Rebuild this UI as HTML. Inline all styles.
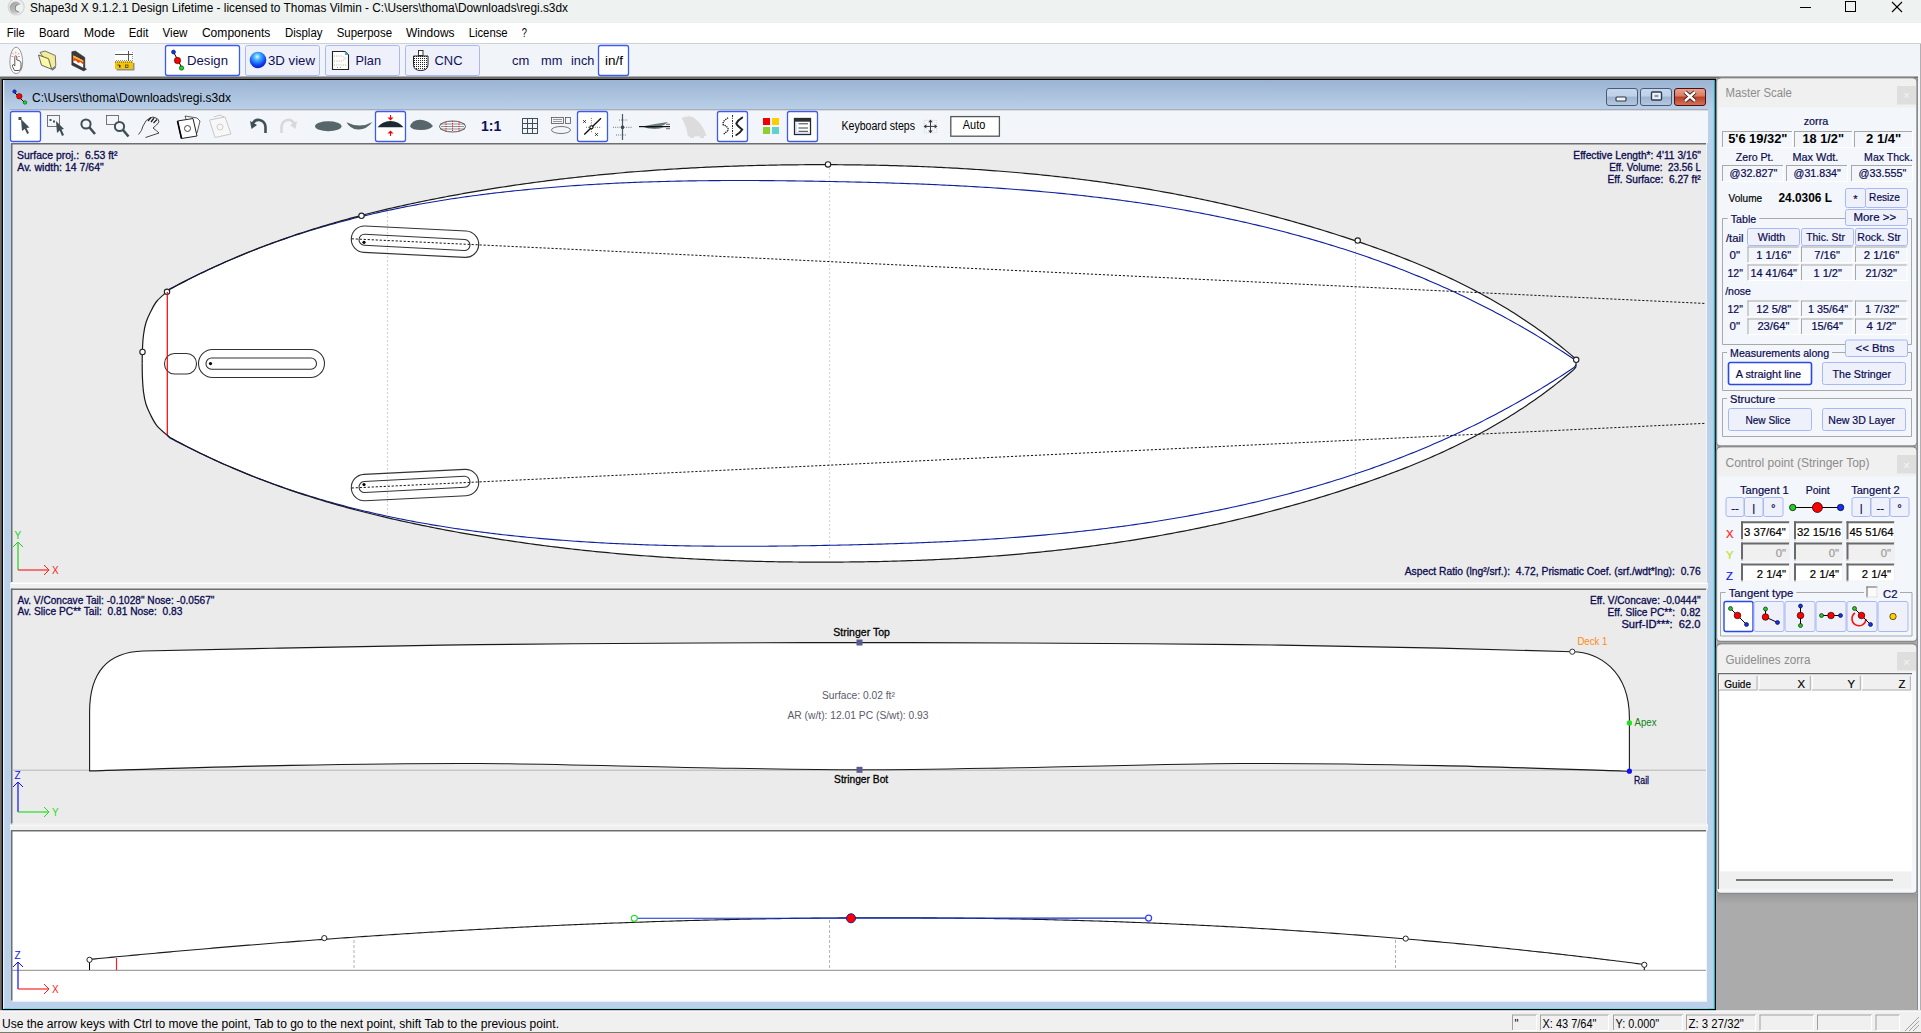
<!DOCTYPE html><html><head><meta charset="utf-8"><style>html,body{margin:0;padding:0;width:1921px;height:1033px;overflow:hidden;background:#f0f0f0;font-family:"Liberation Sans",sans-serif}</style></head><body><svg width="1921" height="1033" viewBox="0 0 1921 1033" style="position:absolute;left:0;top:0">
<defs>
<linearGradient id="ctitle" x1="0" y1="0" x2="0" y2="1"><stop offset="0" stop-color="#9ab3d2"/><stop offset="1" stop-color="#bad0e9"/></linearGradient>
<linearGradient id="btnb" x1="0" y1="0" x2="0" y2="1"><stop offset="0" stop-color="#c6d8ee"/><stop offset="0.45" stop-color="#bdd1ea"/><stop offset="0.5" stop-color="#9fb5cf"/><stop offset="1" stop-color="#b4c9e2"/></linearGradient>
<linearGradient id="btnr" x1="0" y1="0" x2="0" y2="1"><stop offset="0" stop-color="#e8a593"/><stop offset="0.45" stop-color="#d97b62"/><stop offset="0.5" stop-color="#b93f25"/><stop offset="1" stop-color="#d3765c"/></linearGradient>
<linearGradient id="appic" x1="0" y1="0" x2="1" y2="1"><stop offset="0" stop-color="#9a9a9a"/><stop offset="1" stop-color="#e0dcdc"/></linearGradient>
<linearGradient id="shadow" x1="0" y1="0" x2="0" y2="1"><stop offset="0" stop-color="#989898"/><stop offset="1" stop-color="#ababab"/></linearGradient>
<radialGradient id="sphere" cx="0.45" cy="0.3" r="0.7"><stop offset="0" stop-color="#d8f8ff"/><stop offset="0.3" stop-color="#40b0ff"/><stop offset="0.75" stop-color="#1040f0"/><stop offset="1" stop-color="#0020c0"/></radialGradient>
<pattern id="dots" x="0" y="0" width="2" height="2" patternUnits="userSpaceOnUse"><rect width="2" height="2" fill="#fff"/><rect width="1" height="1" fill="#222"/></pattern>
</defs>
<g font-family="Liberation Sans, sans-serif" style="white-space:pre">
<rect x="0" y="0" width="1921" height="23" fill="#eef2f1" />
<circle cx="16.2" cy="7" r="8" fill="none" stroke="#d0d4d4" stroke-width="1.2"/><circle cx="15.8" cy="7.8" r="6.2" fill="url(#appic)"/><circle cx="19.5" cy="8.2" r="3.6" fill="#eef2f1"/><path d="M18.5,4.5 A3.6,3.6 0 0 0 18.8,11.8" fill="none" stroke="#777" stroke-width="0.8"/>
<text x="30" y="11.8" font-size="12.3" fill="#000" text-anchor="start" font-weight="normal"  textLength="538" lengthAdjust="spacingAndGlyphs">Shape3d X 9.1.2.1 Design Lifetime - licensed to Thomas Vilmin - C:\Users\thoma\Downloads\regi.s3dx</text>
<line x1="1800" y1="7.5" x2="1811" y2="7.5" stroke="#000" stroke-width="1" />
<rect x="1845.5" y="1.5" width="10" height="10" fill="none" stroke="#000" stroke-width="1" />
<line x1="1892" y1="2" x2="1902" y2="12" stroke="#000" stroke-width="1.1" />
<line x1="1902" y1="2" x2="1892" y2="12" stroke="#000" stroke-width="1.1" />
<rect x="0" y="23" width="1921" height="20" fill="#ffffff" />
<line x1="0" y1="43.5" x2="1921" y2="43.5" stroke="#d0d0d0" stroke-width="1" />
<text x="6.8" y="36.6" font-size="12.3" fill="#000" text-anchor="start" font-weight="normal"  textLength="18.0" lengthAdjust="spacingAndGlyphs">File</text>
<text x="38.9" y="36.6" font-size="12.3" fill="#000" text-anchor="start" font-weight="normal"  textLength="30.4" lengthAdjust="spacingAndGlyphs">Board</text>
<text x="83.8" y="36.6" font-size="12.3" fill="#000" text-anchor="start" font-weight="normal"  textLength="31.0" lengthAdjust="spacingAndGlyphs">Mode</text>
<text x="128.8" y="36.6" font-size="12.3" fill="#000" text-anchor="start" font-weight="normal"  textLength="19.5" lengthAdjust="spacingAndGlyphs">Edit</text>
<text x="162.5" y="36.6" font-size="12.3" fill="#000" text-anchor="start" font-weight="normal"  textLength="25" lengthAdjust="spacingAndGlyphs">View</text>
<text x="201.9" y="36.6" font-size="12.3" fill="#000" text-anchor="start" font-weight="normal"  textLength="68.5" lengthAdjust="spacingAndGlyphs">Components</text>
<text x="285.0" y="36.6" font-size="12.3" fill="#000" text-anchor="start" font-weight="normal"  textLength="37.5" lengthAdjust="spacingAndGlyphs">Display</text>
<text x="336.7" y="36.6" font-size="12.3" fill="#000" text-anchor="start" font-weight="normal"  textLength="55.3" lengthAdjust="spacingAndGlyphs">Superpose</text>
<text x="406.0" y="36.6" font-size="12.3" fill="#000" text-anchor="start" font-weight="normal"  textLength="48.5" lengthAdjust="spacingAndGlyphs">Windows</text>
<text x="468.7" y="36.6" font-size="12.3" fill="#000" text-anchor="start" font-weight="normal"  textLength="38.9" lengthAdjust="spacingAndGlyphs">License</text>
<text x="521.8" y="36.6" font-size="12.3" fill="#000" text-anchor="start" font-weight="normal"  textLength="5.2" lengthAdjust="spacingAndGlyphs">?</text>
<rect x="0" y="44" width="1921" height="33" fill="#f1f5fa" />
<line x1="0" y1="77.2" x2="1918" y2="77.2" stroke="#6a6a6a" stroke-width="1.6" />
<path d="M16.2,47.3 C20,47.3 22.6,55 22.6,62 C22.6,69 19.8,73.5 16.2,73.5 C12.6,73.5 9.9,69 9.9,62 C9.9,55 12.4,47.3 16.2,47.3 Z" fill="#fbfbfb" stroke="#6a6a6a" stroke-width="0.7"/>
<g stroke="#f08080" stroke-width="0.9"><line x1="15.8" y1="51.5" x2="15.8" y2="53.5"/><line x1="12.5" y1="53" x2="13.8" y2="54.5"/><line x1="19" y1="53" x2="17.8" y2="54.5"/><line x1="11.5" y1="56.5" x2="13.5" y2="56.5"/><line x1="18" y1="56.5" x2="20" y2="56.5"/></g>
<path d="M14.8,66 L14.8,56.5 Q15.8,55 16.8,56.5 L16.8,60 L19,60.5 Q20.5,61 21,63 L21,68 L19.5,70.5 L14.5,70.5 L12.5,66.5 Q12,64.5 13.5,64.5 Z" fill="#fff" stroke="#333" stroke-width="0.8"/>
<path d="M40,52.5 L45,51 L55.3,55.5 L55.8,65.8 L51.5,69.2 Z" fill="#f3ec98" stroke="#555" stroke-width="0.8"/>
<path d="M38.5,55 L48.5,58.7 L51.6,69.2 L41.5,65.2 Z" fill="#fbf8a6" stroke="#555" stroke-width="0.9"/>
<path d="M51.6,69.5 L56,66 L56,67.8 L52.5,70.8 Z" fill="#777"/>
<path d="M71.8,51.7 L75.3,51 L84.8,57.4 L84.8,67.9 L86.5,69.2 L83.7,70.9 L71.8,65.1 Z" fill="#3a3a3a" stroke="#222" stroke-width="0.5"/>
<path d="M73.4,55.5 L83.2,60.6 L83.2,67.8 L73.4,62.6 Z" fill="#ffffff"/><path d="M73.4,55.5 L83.2,60.6 L83.2,64.5 L80.5,62 L78,63 L76,60.5 L73.4,61 Z" fill="#f04010"/><path d="M73.4,55.5 L83.2,60.6 L83.2,62 L73.4,57.5 Z" fill="#ffc020"/>
<rect x="115" y="51" width="18.5" height="10.5" fill="#ffffff"/><line x1="115" y1="54.5" x2="133" y2="54.5" stroke="#444" stroke-width="0.9"/><line x1="128.5" y1="51" x2="128.5" y2="61" stroke="#444" stroke-width="0.9"/><line x1="116" y1="60.5" x2="133" y2="60.5" stroke="#555" stroke-width="0.8" stroke-dasharray="0.8,1.2"/><line x1="132.5" y1="52" x2="132.5" y2="60" stroke="#555" stroke-width="0.8" stroke-dasharray="0.8,1.2"/>
<rect x="116.5" y="63" width="18" height="7.5" fill="#909090"/><rect x="115" y="61.5" width="18" height="7.5" fill="#f6c400"/><g fill="#333"><rect x="119" y="65" width="1.5" height="2.5"/><rect x="117.5" y="64.6" width="2" height="0.8"/><rect x="125.5" y="65" width="2.5" height="2.5" fill="none" stroke="#333" stroke-width="0.7"/></g><line x1="115" y1="62" x2="133" y2="62" stroke="#222" stroke-width="0.9" stroke-dasharray="0.8,1.2"/>
<rect x="165.5" y="45.5" width="74" height="30" fill="#ffffff" stroke="#3c5cf0" stroke-width="1.3" rx="2" />
<rect x="245.5" y="45.5" width="74" height="30" fill="#eef1f9" stroke="#a9b9f5" stroke-width="1" rx="2" />
<rect x="325.5" y="45.5" width="74" height="30" fill="#eef1f9" stroke="#a9b9f5" stroke-width="1" rx="2" />
<rect x="405.5" y="45.5" width="74" height="30" fill="#eef1f9" stroke="#a9b9f5" stroke-width="1" rx="2" />
<line x1="173.5" y1="52" x2="182" y2="68" stroke="#000" stroke-width="1"/><circle cx="173.5" cy="52" r="2" fill="#1030ff" stroke="#000" stroke-width="0.5"/><circle cx="177.5" cy="60.5" r="3.2" fill="#f00" stroke="#000" stroke-width="0.5"/><circle cx="181.5" cy="68" r="2.2" fill="#10e010" stroke="#000" stroke-width="0.5"/>
<text x="187" y="64.8" font-size="13.3" fill="#10105a" text-anchor="start" font-weight="normal"  textLength="41" lengthAdjust="spacingAndGlyphs">Design</text>
<circle cx="258" cy="60" r="8.3" fill="url(#sphere)"/>
<text x="268" y="64.8" font-size="13.3" fill="#10105a" text-anchor="start" font-weight="normal"  textLength="47" lengthAdjust="spacingAndGlyphs">3D view</text>
<path d="M332.5,51.5 L345,51.5 L348.5,55 L348.5,69.5 L332.5,69.5 Z" fill="#fff" stroke="#222" stroke-width="1.1"/><path d="M345,51.5 L348.5,55 L345,55 Z" fill="#3ab0e0"/><g stroke="#a09060" stroke-width="0.7" stroke-dasharray="1,1.2" fill="none"><path d="M334,56 L342,56 L346,58.5 L342,61 L334,61"/><line x1="334" y1="65" x2="346" y2="65"/></g><g stroke="#555" stroke-width="0.6"><line x1="337" y1="67.5" x2="338" y2="67.5"/><line x1="340" y1="67.5" x2="341" y2="67.5"/></g>
<text x="355.5" y="64.8" font-size="13.3" fill="#10105a" text-anchor="start" font-weight="normal"  textLength="25.5" lengthAdjust="spacingAndGlyphs">Plan</text>
<rect x="418.5" y="50.5" width="4.5" height="5" fill="#fff" stroke="#222" stroke-width="0.9"/><path d="M413.5,56 L428,56 L428,64.5 Q428,70.5 420.7,70.5 Q413.5,70.5 413.5,64.5 Z" fill="url(#dots)" stroke="#222" stroke-width="1"/>
<text x="434.5" y="64.8" font-size="13.3" fill="#10105a" text-anchor="start" font-weight="normal"  textLength="28" lengthAdjust="spacingAndGlyphs">CNC</text>
<text x="512" y="64.8" font-size="13.3" fill="#10105a" text-anchor="start" font-weight="normal"  textLength="17.3" lengthAdjust="spacingAndGlyphs">cm</text>
<text x="541" y="64.8" font-size="13.3" fill="#10105a" text-anchor="start" font-weight="normal"  textLength="21.3" lengthAdjust="spacingAndGlyphs">mm</text>
<text x="571" y="64.8" font-size="13.3" fill="#10105a" text-anchor="start" font-weight="normal"  textLength="23.3" lengthAdjust="spacingAndGlyphs">inch</text>
<rect x="598.5" y="45.5" width="30" height="30" fill="#ffffff" stroke="#3c5cf0" stroke-width="1.3" rx="2" />
<text x="605" y="64.8" font-size="13.3" fill="#000" text-anchor="start" font-weight="normal"  textLength="18" lengthAdjust="spacingAndGlyphs">in/f</text>
<rect x="0" y="78" width="1717" height="933" fill="#6f6f6f" />
<rect x="1716" y="78" width="205" height="933" fill="#ababab" />
<rect x="3" y="79" width="1713" height="931" fill="#b9d1ea" />
<rect x="3" y="79" width="1713" height="31" fill="url(#ctitle)" />
<line x1="3" y1="79.5" x2="1716" y2="79.5" stroke="#000" stroke-width="1" />
<line x1="2.5" y1="79" x2="2.5" y2="1010" stroke="#000" stroke-width="1.5" />
<line x1="1715.2" y1="79" x2="1715.2" y2="1010" stroke="#000" stroke-width="1.5" />
<line x1="3" y1="1009.7" x2="1716" y2="1009.7" stroke="#000" stroke-width="1.5" />
<line x1="1714" y1="80" x2="1714" y2="1009" stroke="#3ee0f0" stroke-width="1" />
<line x1="4" y1="1008.5" x2="1714" y2="1008.5" stroke="#3ee0f0" stroke-width="1" />
<line x1="3.7" y1="80" x2="3.7" y2="1009" stroke="#ffffff" stroke-width="1" />
<line x1="15" y1="93" x2="24" y2="102" stroke="#000" stroke-width="1"/><circle cx="14.5" cy="91.5" r="1.8" fill="#1030ff" stroke="#000" stroke-width="0.4"/><circle cx="19.3" cy="96.3" r="2.8" fill="#f00" stroke="#000" stroke-width="0.4"/><circle cx="25" cy="102.5" r="1.8" fill="#10e010" stroke="#000" stroke-width="0.4"/>
<text x="32" y="101.7" font-size="12.3" fill="#000" text-anchor="start" font-weight="normal"  textLength="199" lengthAdjust="spacingAndGlyphs">C:\Users\thoma\Downloads\regi.s3dx</text>
<rect x="1606.5" y="88.5" width="31" height="17" fill="url(#btnb)" stroke="#4a5a72" stroke-width="1" rx="2.5" />
<rect x="1640.5" y="88.5" width="31" height="17" fill="url(#btnb)" stroke="#4a5a72" stroke-width="1" rx="2.5" />
<rect x="1674.5" y="88.5" width="31" height="17" fill="url(#btnr)" stroke="#501010" stroke-width="1" rx="2.5" />
<rect x="1616" y="97" width="10" height="4" fill="#f4f4f4" stroke="#303a50" stroke-width="1.2" rx="1" />
<rect x="1651.5" y="92" width="10" height="8" fill="#f4f4f4" stroke="#303a50" stroke-width="1.4" rx="1" />
<rect x="1654.5" y="94.8" width="4" height="2.4" fill="#7aa0d0" />
<path d="M1685,92 L1695,101 M1695,92 L1685,101" stroke="#2a1010" stroke-width="4.2"/><path d="M1685,92 L1695,101 M1695,92 L1685,101" stroke="#fff" stroke-width="2.4"/>
<rect x="10" y="110" width="1698" height="33" fill="#f2f5fa" />
<line x1="10" y1="109.8" x2="1708" y2="109.8" stroke="#a0a0a0" stroke-width="1" />
<rect x="10.5" y="111.5" width="30" height="30" fill="#ffffff" stroke="#3c5cf0" stroke-width="1.3" rx="2" />
<rect x="375.5" y="111.5" width="30" height="30" fill="#ffffff" stroke="#3c5cf0" stroke-width="1.3" rx="2" />
<rect x="577.5" y="111.5" width="30" height="30" fill="#ffffff" stroke="#3c5cf0" stroke-width="1.3" rx="2" />
<rect x="717.5" y="111.5" width="30" height="30" fill="#ffffff" stroke="#3c5cf0" stroke-width="1.3" rx="2" />
<rect x="787.5" y="111.5" width="30" height="30" fill="#ffffff" stroke="#3c5cf0" stroke-width="1.3" rx="2" />
<rect x="18.5" y="117" width="3" height="3" fill="#3f4f55"/><path d="M21,119 L29.5,127.5 L26.5,128 L29,133 L27.2,134 L24.8,129 L22,131 Z" fill="#3f4f55"/>
<rect x="47.5" y="115.5" width="12" height="11" fill="none" stroke="#555" stroke-width="0.8"/><rect x="49.5" y="119" width="2" height="2" fill="#3f4f55"/><rect x="53" y="120.5" width="2" height="2" fill="#3f4f55"/><path d="M56,121 L64,129 L61.5,129.5 L64,135 L62,136 L59.7,130.5 L57,133 Z" fill="#3f4f55"/>
<circle cx="86" cy="124" r="4.6" fill="none" stroke="#3f4f55" stroke-width="2"/><line x1="89.5" y1="127.5" x2="95" y2="134" stroke="#3f4f55" stroke-width="2.6"/>
<rect x="106.5" y="115.5" width="12" height="9" fill="none" stroke="#555" stroke-width="0.8"/><circle cx="119.5" cy="126.5" r="4.6" fill="#f2f5fa" stroke="#3f4f55" stroke-width="2"/><line x1="123" y1="130" x2="128.5" y2="136.5" stroke="#3f4f55" stroke-width="2.6"/>
<path d="M138.5,134.5 Q142,131 143,126 Q146,119 150,118 Q153,116 156,118 Q159,119 159,122 Q157,125 153,128 Q157,131 159,133 L145.5,137.5" fill="none" stroke="#333" stroke-width="0.9"/><path d="M148,121 L151,117.5 M151,122 L154,118 M153.5,123 L157,119.5" stroke="#222" stroke-width="1.3"/>
<path d="M185,116 L197,118 L200,121 L197,133 L190,131 Z" fill="#fff" stroke="#333" stroke-width="0.8"/><path d="M177.5,121 L193,118.5 L197,136 L181.5,138.5 Z" fill="#fff" stroke="#222" stroke-width="1"/><circle cx="187.5" cy="128.5" r="3" fill="none" stroke="#333" stroke-width="0.9"/><path d="M177.5,121 L181.5,138.5" stroke="#000" stroke-width="1.6"/>
<path d="M209.5,120 L225,117 L231,134 L215,137.5 Z" fill="#f8f8f8" stroke="#c8c8c8" stroke-width="1"/><circle cx="220" cy="127" r="3" fill="none" stroke="#c8c8c8" stroke-width="0.9"/><path d="M214,117 L220,115 L224,117" stroke="#c8c8c8" fill="none"/>
<path d="M252,126 Q254,119 259.5,120 Q265,121 265.5,127 L265.5,133" fill="none" stroke="#3f4f55" stroke-width="2.6"/><path d="M250,121 L251.5,129 L257,125 Z" fill="#3f4f55"/>
<path d="M295,126 Q293,119 287.5,120 Q282,121 281.5,127 L281.5,133" fill="none" stroke="#d8d8d8" stroke-width="2.6"/><path d="M297,121 L295.5,129 L290,125 Z" fill="#d8d8d8"/>
<ellipse cx="328.3" cy="126.2" rx="13.2" ry="5" fill="#566669"/>
<path d="M346.5,122.2 Q360,129 372.5,122 Q366,130 358,129.5 Q350,129 346.5,122.2 Z" fill="#566669"/>
<path d="M377.5,127.3 Q382,121.3 390.5,121 Q399,121.3 403.5,127.3 Z" fill="#1a2a30"/><path d="M390.5,115 L390.5,120" stroke="#f00" stroke-width="1"/><path d="M387.5,117.5 L390.5,120.5 L393.5,117.5 Z" fill="#f00"/><path d="M390.5,131 L390.5,136" stroke="#f00" stroke-width="1"/><path d="M387.5,133.5 L390.5,130.5 L393.5,133.5 Z" fill="#f00"/>
<path d="M410,126.5 Q412,120 420,119.8 Q428,120 433,126 Q430,130 421,130 Q412,130 410,126.5 Z" fill="#566669"/>
<ellipse cx="452.5" cy="126.5" rx="13" ry="5.5" fill="none" stroke="#333" stroke-width="0.8"/><g stroke="#333" stroke-width="0.5"><line x1="440" y1="124" x2="465" y2="124"/><line x1="440" y1="129" x2="465" y2="129"/><line x1="441" y1="126.5" x2="464" y2="126.5"/></g><g stroke="#f00" stroke-width="0.9" stroke-dasharray="1.2,1"><line x1="446" y1="121.5" x2="446" y2="131.5"/><line x1="452.5" y1="121" x2="452.5" y2="132"/><line x1="459" y1="121.5" x2="459" y2="131.5"/></g>
<text x="481" y="131" font-size="14" fill="#10105a" text-anchor="start" font-weight="bold" >1:1</text>
<g fill="none" stroke="#3f4f55" stroke-width="1"><rect x="522.5" y="118.5" width="15" height="15"/><line x1="527.5" y1="118.5" x2="527.5" y2="133.5"/><line x1="532.5" y1="118.5" x2="532.5" y2="133.5"/><line x1="522.5" y1="123.5" x2="537.5" y2="123.5"/><line x1="522.5" y1="128.5" x2="537.5" y2="128.5"/></g>
<g fill="none" stroke="#555" stroke-width="0.8"><rect x="551.5" y="117.5" width="12" height="6"/><rect x="565.5" y="117.5" width="5" height="6"/><ellipse cx="561" cy="130" rx="9.5" ry="3.5"/></g><g stroke="#555" stroke-width="0.6"><line x1="553" y1="119.5" x2="562" y2="119.5"/><line x1="553" y1="121.5" x2="562" y2="121.5"/></g>
<g stroke="#555" stroke-width="0.9" stroke-dasharray="0.9,1.3"><line x1="591.4" y1="118" x2="591.4" y2="133"/><line x1="586" y1="127.3" x2="601.5" y2="127.3"/></g>
<line x1="584.3" y1="134.6" x2="601" y2="118.2" stroke="#111" stroke-width="1.4"/><circle cx="591.4" cy="127.3" r="1.6" fill="#fff" stroke="#111" stroke-width="1.1"/>
<g stroke="#111" stroke-width="0.9"><path d="M583.2,120.2 L585.8,122.8 M585.8,120.2 L583.2,122.8"/><path d="M595.2,133.2 L597.8,135.8 M597.8,133.2 L595.2,135.8"/></g>
<g stroke="#4a5a60" stroke-width="0.9" stroke-dasharray="0.9,1.3"><line x1="613" y1="127.3" x2="632" y2="127.3"/><line x1="619" y1="120" x2="628" y2="120"/><line x1="616" y1="135" x2="627" y2="135"/></g><line x1="622.5" y1="114" x2="622.5" y2="140" stroke="#4a5a60" stroke-width="1.2"/><rect x="621" y="125.8" width="3" height="3" fill="#3a4a50"/>
<path d="M642,126.5 Q655,123.5 668,122 Q665,125 660,126.5 Z" fill="#6a7a80"/><path d="M642,126.5 Q652,130.5 664,127.5 L642,126.5 Z" fill="#4a5a60"/><line x1="639" y1="126.6" x2="670" y2="126.6" stroke="#111" stroke-width="1.2"/><g stroke="#444" stroke-width="0.8"><line x1="666" y1="124.3" x2="670" y2="124.3"/><line x1="666" y1="128.7" x2="670" y2="128.7"/></g>
<path d="M681.5,118 Q687,115.5 692,116.8 Q701,121 706.5,135.5 L704,136 L704,138 L700,138 L700,136.3 L694,136.5 L694,138 L690,138 L690,136.5 L688,136.5 Q686.5,126 681.5,118 Z" fill="#dcdcdc"/>
<path d="M728.1,117.7 L723.2,121.5 L723.2,124.8 L726.4,126.2 L728,128.5 L727.9,130.5 L723.8,134" fill="none" stroke="#111" stroke-width="1.3" stroke-dasharray="1.3,0.9"/>
<line x1="732.5" y1="115" x2="732.5" y2="137.5" stroke="#111" stroke-width="0.9" stroke-dasharray="2.2,1,0.8,1"/>
<path d="M742.2,117.6 Q738,120 736.3,123.5 Q737.5,126 742.2,129.4 Q740,133 736.3,135" fill="none" stroke="#1a2428" stroke-width="1.9" stroke-linecap="round"/>
<rect x="763" y="118" width="7" height="7" fill="#f00000"/><rect x="772" y="118" width="7" height="7" fill="#ffcc00"/><rect x="763" y="127" width="7" height="7" fill="#8cd030"/><rect x="772" y="127" width="7" height="7" fill="#60d0d0"/>
<rect x="794.5" y="118.5" width="16" height="16" fill="#fff" stroke="#222a30" stroke-width="1.3"/><rect x="794.5" y="118.5" width="16" height="3.2" fill="#2a3238"/><path d="M796,122.5 L796,133 L809,133" fill="none" stroke="#a8c0ff" stroke-width="0.8"/><g stroke="#222a30" stroke-width="0.9"><line x1="798.5" y1="123.8" x2="808" y2="123.8"/><line x1="798.5" y1="128" x2="808" y2="128"/><line x1="798.5" y1="131.3" x2="808" y2="131.3"/></g>
<text x="841.5" y="129.5" font-size="12.3" fill="#000" text-anchor="start" font-weight="normal"  textLength="73.5" lengthAdjust="spacingAndGlyphs">Keyboard steps</text>
<rect x="924.3" y="120.3" width="12.3" height="12.4" fill="none" stroke="#c0c0c0" stroke-width="0.6" stroke-dasharray="1,1"/><g stroke="#3a3a3a" stroke-width="1"><line x1="930.5" y1="120.5" x2="930.5" y2="132.5"/><line x1="924.5" y1="126.4" x2="936.5" y2="126.4"/></g><g fill="#3a3a3a"><path d="M930.5,119.5 L928.3,122.3 L932.7,122.3 Z"/><path d="M930.5,133.3 L928.3,130.5 L932.7,130.5 Z"/><path d="M923.6,126.4 L926.4,124.2 L926.4,128.6 Z"/><path d="M937.4,126.4 L934.6,124.2 L934.6,128.6 Z"/></g>
<rect x="950.8" y="116.6" width="48.6" height="19.6" fill="#ffffff" stroke="#555" stroke-width="1.3" />
<text x="962.8" y="128.9" font-size="12.3" fill="#000" text-anchor="start" font-weight="normal"  textLength="22.5" lengthAdjust="spacingAndGlyphs">Auto</text>
<rect x="10" y="583" width="1698" height="6" fill="#f0f0f0" />
<line x1="10" y1="583.5" x2="1708" y2="583.5" stroke="#ffffff" stroke-width="1" />
<rect x="10" y="824.5" width="1698" height="6" fill="#f0f0f0" />
<line x1="10" y1="825" x2="1708" y2="825" stroke="#ffffff" stroke-width="1" />
<rect x="10" y="1001.5" width="1698" height="7" fill="#b9d1ea" />
<rect x="11" y="143" width="1696" height="440" fill="#ebebeb" />
<line x1="11" y1="143.75" x2="1707" y2="143.75" stroke="#6e6e6e" stroke-width="1.5" />
<line x1="11.75" y1="143" x2="11.75" y2="583" stroke="#6e6e6e" stroke-width="1.5" />
<line x1="11" y1="582.5" x2="1707" y2="582.5" stroke="#f4f4f4" stroke-width="1" />
<line x1="1706.5" y1="143" x2="1706.5" y2="583" stroke="#f4f4f4" stroke-width="1" />
<rect x="11" y="588.5" width="1696" height="236" fill="#ebebeb" />
<line x1="11" y1="589.25" x2="1707" y2="589.25" stroke="#6e6e6e" stroke-width="1.5" />
<line x1="11.75" y1="588.5" x2="11.75" y2="824.5" stroke="#6e6e6e" stroke-width="1.5" />
<line x1="11" y1="824.0" x2="1707" y2="824.0" stroke="#f4f4f4" stroke-width="1" />
<line x1="1706.5" y1="588.5" x2="1706.5" y2="824.5" stroke="#f4f4f4" stroke-width="1" />
<rect x="11" y="830" width="1696" height="171.5" fill="#ffffff" />
<line x1="11" y1="830.75" x2="1707" y2="830.75" stroke="#6e6e6e" stroke-width="1.5" />
<line x1="11.75" y1="830" x2="11.75" y2="1001.5" stroke="#6e6e6e" stroke-width="1.5" />
<line x1="11" y1="1001.0" x2="1707" y2="1001.0" stroke="#f4f4f4" stroke-width="1" />
<line x1="1706.5" y1="830" x2="1706.5" y2="1001.5" stroke="#f4f4f4" stroke-width="1" />
<svg x="12" y="144.5" width="1694" height="438" viewBox="12 144.5 1694 438" overflow="hidden">
<path d="M142.2,363.40 L142.4,350.00 L143.5,335.00 L146.0,322.50 L150.5,312.00 L157.0,301.00 L167.0,291.80 L167.0,291.80 L170.0,289.31 L173.0,287.68 L176.0,286.07 L179.0,284.48 L182.0,282.90 L185.0,281.35 L188.0,279.81 L191.0,278.28 L194.0,276.78 L197.0,275.29 L200.0,273.82 L203.0,272.36 L206.0,270.92 L209.0,269.50 L212.0,268.09 L215.0,266.70 L218.0,265.33 L221.0,263.97 L224.0,262.62 L227.0,261.29 L230.0,259.98 L233.0,258.68 L236.0,257.40 L239.0,256.13 L242.0,254.88 L245.0,253.64 L248.0,252.42 L251.0,251.21 L254.0,250.01 L257.0,248.83 L260.0,247.66 L263.0,246.51 L266.0,245.37 L269.0,244.24 L272.0,243.13 L275.0,242.03 L278.0,240.94 L281.0,239.87 L284.0,238.81 L287.0,237.76 L290.0,236.72 L293.0,235.70 L296.0,234.69 L299.0,233.69 L302.0,232.71 L305.0,231.73 L308.0,230.77 L311.0,229.82 L314.0,228.88 L317.0,227.95 L320.0,227.03 L323.0,226.12 L326.0,225.23 L329.0,224.34 L332.0,223.47 L335.0,222.60 L338.0,221.75 L341.0,220.91 L344.0,220.07 L347.0,219.25 L350.0,218.44 L353.0,217.63 L356.0,216.84 L359.0,216.05 L362.0,215.28 L365.0,214.51 L368.0,213.76 L371.0,213.01 L374.0,212.27 L377.0,211.54 L380.0,210.81 L383.0,210.10 L386.0,209.39 L389.0,208.69 L392.0,208.00 L395.0,207.32 L398.0,206.64 L401.0,205.98 L404.0,205.32 L407.0,204.66 L410.0,204.02 L413.0,203.38 L416.0,202.74 L419.0,202.12 L422.0,201.50 L425.0,200.88 L428.0,200.28 L431.0,199.68 L434.0,199.08 L437.0,198.49 L440.0,197.91 L443.0,197.33 L446.0,196.76 L449.0,196.20 L452.0,195.64 L455.0,195.08 L458.0,194.54 L461.0,193.99 L464.0,193.46 L467.0,192.93 L470.0,192.40 L473.0,191.88 L476.0,191.37 L479.0,190.86 L482.0,190.36 L485.0,189.86 L488.0,189.37 L491.0,188.89 L494.0,188.41 L497.0,187.93 L500.0,187.46 L503.0,187.00 L506.0,186.54 L509.0,186.09 L512.0,185.64 L515.0,185.20 L518.0,184.77 L521.0,184.34 L524.0,183.91 L527.0,183.49 L530.0,183.08 L533.0,182.67 L536.0,182.26 L539.0,181.86 L542.0,181.47 L545.0,181.08 L548.0,180.70 L551.0,180.32 L554.0,179.95 L557.0,179.58 L560.0,179.22 L563.0,178.86 L566.0,178.50 L569.0,178.16 L572.0,177.81 L575.0,177.48 L578.0,177.14 L581.0,176.82 L584.0,176.49 L587.0,176.17 L590.0,175.86 L593.0,175.55 L596.0,175.25 L599.0,174.95 L602.0,174.66 L605.0,174.37 L608.0,174.08 L611.0,173.80 L614.0,173.53 L617.0,173.26 L620.0,172.99 L623.0,172.73 L626.0,172.47 L629.0,172.22 L632.0,171.97 L635.0,171.73 L638.0,171.49 L641.0,171.26 L644.0,171.03 L647.0,170.81 L650.0,170.58 L653.0,170.37 L656.0,170.16 L659.0,169.95 L662.0,169.75 L665.0,169.55 L668.0,169.35 L671.0,169.17 L674.0,168.98 L677.0,168.80 L680.0,168.62 L683.0,168.45 L686.0,168.28 L689.0,168.12 L692.0,167.95 L695.0,167.80 L698.0,167.65 L701.0,167.50 L704.0,167.35 L707.0,167.21 L710.0,167.08 L713.0,166.95 L716.0,166.82 L719.0,166.69 L722.0,166.57 L725.0,166.46 L728.0,166.35 L731.0,166.24 L734.0,166.13 L737.0,166.03 L740.0,165.94 L743.0,165.84 L746.0,165.75 L749.0,165.67 L752.0,165.59 L755.0,165.51 L758.0,165.43 L761.0,165.36 L764.0,165.29 L767.0,165.23 L770.0,165.17 L773.0,165.11 L776.0,165.06 L779.0,165.01 L782.0,164.97 L785.0,164.92 L788.0,164.88 L791.0,164.85 L794.0,164.82 L797.0,164.79 L800.0,164.76 L803.0,164.74 L806.0,164.72 L809.0,164.71 L812.0,164.69 L815.0,164.69 L818.0,164.68 L821.0,164.68 L824.0,164.68 L827.0,164.68 L830.0,164.69 L833.0,164.70 L836.0,164.71 L839.0,164.73 L842.0,164.75 L845.0,164.78 L848.0,164.80 L851.0,164.83 L854.0,164.87 L857.0,164.90 L860.0,164.94 L863.0,164.99 L866.0,165.03 L869.0,165.08 L872.0,165.14 L875.0,165.20 L878.0,165.26 L881.0,165.32 L884.0,165.39 L887.0,165.47 L890.0,165.54 L893.0,165.62 L896.0,165.71 L899.0,165.79 L902.0,165.88 L905.0,165.98 L908.0,166.08 L911.0,166.18 L914.0,166.29 L917.0,166.40 L920.0,166.52 L923.0,166.63 L926.0,166.76 L929.0,166.89 L932.0,167.02 L935.0,167.15 L938.0,167.29 L941.0,167.44 L944.0,167.58 L947.0,167.74 L950.0,167.89 L953.0,168.05 L956.0,168.22 L959.0,168.39 L962.0,168.56 L965.0,168.74 L968.0,168.93 L971.0,169.11 L974.0,169.31 L977.0,169.50 L980.0,169.70 L983.0,169.91 L986.0,170.12 L989.0,170.34 L992.0,170.56 L995.0,170.78 L998.0,171.01 L1001.0,171.25 L1004.0,171.49 L1007.0,171.73 L1010.0,171.98 L1013.0,172.23 L1016.0,172.49 L1019.0,172.75 L1022.0,173.02 L1025.0,173.30 L1028.0,173.58 L1031.0,173.86 L1034.0,174.15 L1037.0,174.44 L1040.0,174.74 L1043.0,175.05 L1046.0,175.36 L1049.0,175.67 L1052.0,175.99 L1055.0,176.32 L1058.0,176.65 L1061.0,176.98 L1064.0,177.32 L1067.0,177.67 L1070.0,178.02 L1073.0,178.38 L1076.0,178.75 L1079.0,179.11 L1082.0,179.49 L1085.0,179.87 L1088.0,180.26 L1091.0,180.65 L1094.0,181.04 L1097.0,181.45 L1100.0,181.86 L1103.0,182.27 L1106.0,182.69 L1109.0,183.12 L1112.0,183.55 L1115.0,183.99 L1118.0,184.43 L1121.0,184.88 L1124.0,185.33 L1127.0,185.80 L1130.0,186.26 L1133.0,186.74 L1136.0,187.22 L1139.0,187.70 L1142.0,188.20 L1145.0,188.69 L1148.0,189.20 L1151.0,189.71 L1154.0,190.23 L1157.0,190.75 L1160.0,191.28 L1163.0,191.81 L1166.0,192.36 L1169.0,192.90 L1172.0,193.46 L1175.0,194.02 L1178.0,194.59 L1181.0,195.16 L1184.0,195.74 L1187.0,196.33 L1190.0,196.93 L1193.0,197.53 L1196.0,198.14 L1199.0,198.75 L1202.0,199.37 L1205.0,200.00 L1208.0,200.63 L1211.0,201.27 L1214.0,201.92 L1217.0,202.58 L1220.0,203.24 L1223.0,203.91 L1226.0,204.58 L1229.0,205.27 L1232.0,205.96 L1235.0,206.65 L1238.0,207.36 L1241.0,208.07 L1244.0,208.79 L1247.0,209.51 L1250.0,210.24 L1253.0,210.98 L1256.0,211.73 L1259.0,212.48 L1262.0,213.25 L1265.0,214.01 L1268.0,214.79 L1271.0,215.57 L1274.0,216.37 L1277.0,217.16 L1280.0,217.97 L1283.0,218.78 L1286.0,219.60 L1289.0,220.43 L1292.0,221.27 L1295.0,222.11 L1298.0,222.96 L1301.0,223.82 L1304.0,224.69 L1307.0,225.56 L1310.0,226.45 L1313.0,227.34 L1316.0,228.23 L1319.0,229.14 L1322.0,230.05 L1325.0,230.97 L1328.0,231.90 L1331.0,232.84 L1334.0,233.79 L1337.0,234.74 L1340.0,235.70 L1343.0,236.67 L1346.0,237.65 L1349.0,238.63 L1352.0,239.63 L1355.0,240.63 L1358.0,241.64 L1361.0,242.66 L1364.0,243.68 L1367.0,244.72 L1370.0,245.77 L1373.0,246.82 L1376.0,247.89 L1379.0,248.96 L1382.0,250.05 L1385.0,251.14 L1388.0,252.25 L1391.0,253.37 L1394.0,254.50 L1397.0,255.64 L1400.0,256.80 L1403.0,257.96 L1406.0,259.14 L1409.0,260.34 L1412.0,261.55 L1415.0,262.77 L1418.0,264.00 L1421.0,265.26 L1424.0,266.52 L1427.0,267.80 L1430.0,269.10 L1433.0,270.41 L1436.0,271.74 L1439.0,273.08 L1442.0,274.45 L1445.0,275.82 L1448.0,277.22 L1451.0,278.64 L1454.0,280.07 L1457.0,281.52 L1460.0,282.99 L1463.0,284.48 L1466.0,285.99 L1469.0,287.51 L1472.0,289.06 L1475.0,290.63 L1478.0,292.22 L1481.0,293.83 L1484.0,295.46 L1487.0,297.11 L1490.0,298.79 L1493.0,300.49 L1496.0,302.21 L1499.0,303.96 L1502.0,305.73 L1505.0,307.53 L1508.0,309.36 L1511.0,311.21 L1514.0,313.09 L1517.0,315.00 L1520.0,316.94 L1523.0,318.90 L1526.0,320.90 L1529.0,322.93 L1532.0,324.99 L1535.0,327.08 L1538.0,329.20 L1541.0,331.36 L1544.0,333.55 L1547.0,335.77 L1550.0,338.03 L1553.0,340.33 L1556.0,342.66 L1559.0,345.03 L1562.0,347.43 L1565.0,349.88 L1568.0,352.36 L1571.0,354.88 L1574.0,357.44 L1576.0,360.00 L1576.0,366.80 L1576.0,366.80 L1574.0,369.36 L1571.0,371.92 L1568.0,374.44 L1565.0,376.92 L1562.0,379.37 L1559.0,381.77 L1556.0,384.14 L1553.0,386.47 L1550.0,388.77 L1547.0,391.03 L1544.0,393.25 L1541.0,395.44 L1538.0,397.60 L1535.0,399.72 L1532.0,401.81 L1529.0,403.87 L1526.0,405.90 L1523.0,407.90 L1520.0,409.86 L1517.0,411.80 L1514.0,413.71 L1511.0,415.59 L1508.0,417.44 L1505.0,419.27 L1502.0,421.07 L1499.0,422.84 L1496.0,424.59 L1493.0,426.31 L1490.0,428.01 L1487.0,429.69 L1484.0,431.34 L1481.0,432.97 L1478.0,434.58 L1475.0,436.17 L1472.0,437.74 L1469.0,439.29 L1466.0,440.81 L1463.0,442.32 L1460.0,443.81 L1457.0,445.28 L1454.0,446.73 L1451.0,448.16 L1448.0,449.58 L1445.0,450.98 L1442.0,452.35 L1439.0,453.72 L1436.0,455.06 L1433.0,456.39 L1430.0,457.70 L1427.0,459.00 L1424.0,460.28 L1421.0,461.54 L1418.0,462.80 L1415.0,464.03 L1412.0,465.25 L1409.0,466.46 L1406.0,467.66 L1403.0,468.84 L1400.0,470.00 L1397.0,471.16 L1394.0,472.30 L1391.0,473.43 L1388.0,474.55 L1385.0,475.66 L1382.0,476.75 L1379.0,477.84 L1376.0,478.91 L1373.0,479.98 L1370.0,481.03 L1367.0,482.08 L1364.0,483.12 L1361.0,484.14 L1358.0,485.16 L1355.0,486.17 L1352.0,487.17 L1349.0,488.17 L1346.0,489.15 L1343.0,490.13 L1340.0,491.10 L1337.0,492.06 L1334.0,493.01 L1331.0,493.96 L1328.0,494.90 L1325.0,495.83 L1322.0,496.75 L1319.0,497.66 L1316.0,498.57 L1313.0,499.46 L1310.0,500.35 L1307.0,501.24 L1304.0,502.11 L1301.0,502.98 L1298.0,503.84 L1295.0,504.69 L1292.0,505.53 L1289.0,506.37 L1286.0,507.20 L1283.0,508.02 L1280.0,508.83 L1277.0,509.64 L1274.0,510.43 L1271.0,511.23 L1268.0,512.01 L1265.0,512.79 L1262.0,513.55 L1259.0,514.32 L1256.0,515.07 L1253.0,515.82 L1250.0,516.56 L1247.0,517.29 L1244.0,518.01 L1241.0,518.73 L1238.0,519.44 L1235.0,520.15 L1232.0,520.84 L1229.0,521.53 L1226.0,522.22 L1223.0,522.89 L1220.0,523.56 L1217.0,524.22 L1214.0,524.88 L1211.0,525.53 L1208.0,526.17 L1205.0,526.80 L1202.0,527.43 L1199.0,528.05 L1196.0,528.66 L1193.0,529.27 L1190.0,529.87 L1187.0,530.47 L1184.0,531.06 L1181.0,531.64 L1178.0,532.21 L1175.0,532.78 L1172.0,533.34 L1169.0,533.90 L1166.0,534.44 L1163.0,534.99 L1160.0,535.52 L1157.0,536.05 L1154.0,536.57 L1151.0,537.09 L1148.0,537.60 L1145.0,538.11 L1142.0,538.60 L1139.0,539.10 L1136.0,539.58 L1133.0,540.06 L1130.0,540.54 L1127.0,541.00 L1124.0,541.47 L1121.0,541.92 L1118.0,542.37 L1115.0,542.81 L1112.0,543.25 L1109.0,543.68 L1106.0,544.11 L1103.0,544.53 L1100.0,544.94 L1097.0,545.35 L1094.0,545.76 L1091.0,546.15 L1088.0,546.54 L1085.0,546.93 L1082.0,547.31 L1079.0,547.69 L1076.0,548.05 L1073.0,548.42 L1070.0,548.78 L1067.0,549.13 L1064.0,549.48 L1061.0,549.82 L1058.0,550.15 L1055.0,550.48 L1052.0,550.81 L1049.0,551.13 L1046.0,551.44 L1043.0,551.75 L1040.0,552.06 L1037.0,552.36 L1034.0,552.65 L1031.0,552.94 L1028.0,553.22 L1025.0,553.50 L1022.0,553.78 L1019.0,554.05 L1016.0,554.31 L1013.0,554.57 L1010.0,554.82 L1007.0,555.07 L1004.0,555.31 L1001.0,555.55 L998.0,555.79 L995.0,556.02 L992.0,556.24 L989.0,556.46 L986.0,556.68 L983.0,556.89 L980.0,557.10 L977.0,557.30 L974.0,557.49 L971.0,557.69 L968.0,557.87 L965.0,558.06 L962.0,558.24 L959.0,558.41 L956.0,558.58 L953.0,558.75 L950.0,558.91 L947.0,559.06 L944.0,559.22 L941.0,559.36 L938.0,559.51 L935.0,559.65 L932.0,559.78 L929.0,559.91 L926.0,560.04 L923.0,560.17 L920.0,560.28 L917.0,560.40 L914.0,560.51 L911.0,560.62 L908.0,560.72 L905.0,560.82 L902.0,560.92 L899.0,561.01 L896.0,561.09 L893.0,561.18 L890.0,561.26 L887.0,561.33 L884.0,561.41 L881.0,561.48 L878.0,561.54 L875.0,561.60 L872.0,561.66 L869.0,561.72 L866.0,561.77 L863.0,561.81 L860.0,561.86 L857.0,561.90 L854.0,561.93 L851.0,561.97 L848.0,562.00 L845.0,562.02 L842.0,562.05 L839.0,562.07 L836.0,562.09 L833.0,562.10 L830.0,562.11 L827.0,562.12 L824.0,562.12 L821.0,562.12 L818.0,562.12 L815.0,562.11 L812.0,562.11 L809.0,562.09 L806.0,562.08 L803.0,562.06 L800.0,562.04 L797.0,562.01 L794.0,561.98 L791.0,561.95 L788.0,561.92 L785.0,561.88 L782.0,561.83 L779.0,561.79 L776.0,561.74 L773.0,561.69 L770.0,561.63 L767.0,561.57 L764.0,561.51 L761.0,561.44 L758.0,561.37 L755.0,561.29 L752.0,561.21 L749.0,561.13 L746.0,561.05 L743.0,560.96 L740.0,560.86 L737.0,560.77 L734.0,560.67 L731.0,560.56 L728.0,560.45 L725.0,560.34 L722.0,560.23 L719.0,560.11 L716.0,559.98 L713.0,559.85 L710.0,559.72 L707.0,559.59 L704.0,559.45 L701.0,559.30 L698.0,559.15 L695.0,559.00 L692.0,558.85 L689.0,558.68 L686.0,558.52 L683.0,558.35 L680.0,558.18 L677.0,558.00 L674.0,557.82 L671.0,557.63 L668.0,557.45 L665.0,557.25 L662.0,557.05 L659.0,556.85 L656.0,556.64 L653.0,556.43 L650.0,556.22 L647.0,555.99 L644.0,555.77 L641.0,555.54 L638.0,555.31 L635.0,555.07 L632.0,554.83 L629.0,554.58 L626.0,554.33 L623.0,554.07 L620.0,553.81 L617.0,553.54 L614.0,553.27 L611.0,553.00 L608.0,552.72 L605.0,552.43 L602.0,552.14 L599.0,551.85 L596.0,551.55 L593.0,551.25 L590.0,550.94 L587.0,550.63 L584.0,550.31 L581.0,549.98 L578.0,549.66 L575.0,549.32 L572.0,548.99 L569.0,548.64 L566.0,548.30 L563.0,547.94 L560.0,547.58 L557.0,547.22 L554.0,546.85 L551.0,546.48 L548.0,546.10 L545.0,545.72 L542.0,545.33 L539.0,544.94 L536.0,544.54 L533.0,544.13 L530.0,543.72 L527.0,543.31 L524.0,542.89 L521.0,542.46 L518.0,542.03 L515.0,541.60 L512.0,541.16 L509.0,540.71 L506.0,540.26 L503.0,539.80 L500.0,539.34 L497.0,538.87 L494.0,538.39 L491.0,537.91 L488.0,537.43 L485.0,536.94 L482.0,536.44 L479.0,535.94 L476.0,535.43 L473.0,534.92 L470.0,534.40 L467.0,533.87 L464.0,533.34 L461.0,532.81 L458.0,532.26 L455.0,531.72 L452.0,531.16 L449.0,530.60 L446.0,530.04 L443.0,529.47 L440.0,528.89 L437.0,528.31 L434.0,527.72 L431.0,527.12 L428.0,526.52 L425.0,525.92 L422.0,525.30 L419.0,524.68 L416.0,524.06 L413.0,523.42 L410.0,522.78 L407.0,522.14 L404.0,521.48 L401.0,520.82 L398.0,520.16 L395.0,519.48 L392.0,518.80 L389.0,518.11 L386.0,517.41 L383.0,516.70 L380.0,515.99 L377.0,515.26 L374.0,514.53 L371.0,513.79 L368.0,513.04 L365.0,512.29 L362.0,511.52 L359.0,510.75 L356.0,509.96 L353.0,509.17 L350.0,508.36 L347.0,507.55 L344.0,506.73 L341.0,505.89 L338.0,505.05 L335.0,504.20 L332.0,503.33 L329.0,502.46 L326.0,501.57 L323.0,500.68 L320.0,499.77 L317.0,498.85 L314.0,497.92 L311.0,496.98 L308.0,496.03 L305.0,495.07 L302.0,494.09 L299.0,493.11 L296.0,492.11 L293.0,491.10 L290.0,490.08 L287.0,489.04 L284.0,487.99 L281.0,486.93 L278.0,485.86 L275.0,484.77 L272.0,483.67 L269.0,482.56 L266.0,481.43 L263.0,480.29 L260.0,479.14 L257.0,477.97 L254.0,476.79 L251.0,475.59 L248.0,474.38 L245.0,473.16 L242.0,471.92 L239.0,470.67 L236.0,469.40 L233.0,468.12 L230.0,466.82 L227.0,465.51 L224.0,464.18 L221.0,462.83 L218.0,461.47 L215.0,460.10 L212.0,458.71 L209.0,457.30 L206.0,455.88 L203.0,454.44 L200.0,452.98 L197.0,451.51 L194.0,450.02 L191.0,448.52 L188.0,446.99 L185.0,445.45 L182.0,443.90 L179.0,442.32 L176.0,440.73 L173.0,439.12 L170.0,437.49 L167.0,435.00 L167.0,435.00 L157.0,425.80 L150.5,414.80 L146.0,404.30 L143.5,391.80 L142.4,376.80 Z" fill="#ffffff" stroke="none"/>
<line x1="387.5" y1="212" x2="387.5" y2="515" stroke="#d4d4d4" stroke-width="1.2" stroke-dasharray="2,2"/>
<line x1="829.5" y1="168" x2="829.5" y2="560" stroke="#d4d4d4" stroke-width="1.2" stroke-dasharray="2,2"/>
<line x1="1355.5" y1="243" x2="1355.5" y2="484" stroke="#d4d4d4" stroke-width="1.2" stroke-dasharray="2,2"/>
<path d="M167.0,291.80 L170.0,288.82 L173.0,287.22 L176.0,285.65 L179.0,284.09 L182.0,282.54 L185.0,281.01 L188.0,279.50 L191.0,278.00 L194.0,276.52 L197.0,275.06 L200.0,273.61 L203.0,272.18 L206.0,270.76 L209.0,269.36 L212.0,267.98 L215.0,266.61 L218.0,265.25 L221.0,263.91 L224.0,262.59 L227.0,261.28 L230.0,259.99 L233.0,258.71 L236.0,257.44 L239.0,256.19 L242.0,254.96 L245.0,253.74 L248.0,252.53 L251.0,251.34 L254.0,250.16 L257.0,249.00 L260.0,247.85 L263.0,246.71 L266.0,245.59 L269.0,244.48 L272.0,243.38 L275.0,242.30 L278.0,241.23 L281.0,240.18 L284.0,239.14 L287.0,238.11 L290.0,237.09 L293.0,236.09 L296.0,235.10 L299.0,234.12 L302.0,233.16 L305.0,232.21 L308.0,231.27 L311.0,230.34 L314.0,229.42 L317.0,228.52 L320.0,227.63 L323.0,226.75 L326.0,225.88 L329.0,225.03 L332.0,224.18 L335.0,223.35 L338.0,222.53 L341.0,221.72 L344.0,220.92 L347.0,220.13 L350.0,219.36 L353.0,218.59 L356.0,217.84 L359.0,217.09 L362.0,216.36 L365.0,215.64 L368.0,214.92 L371.0,214.22 L374.0,213.53 L377.0,212.85 L380.0,212.18 L383.0,211.52 L386.0,210.86 L389.0,210.22 L392.0,209.59 L395.0,208.97 L398.0,208.36 L401.0,207.75 L404.0,207.16 L407.0,206.57 L410.0,206.00 L413.0,205.43 L416.0,204.87 L419.0,204.32 L422.0,203.78 L425.0,203.25 L428.0,202.73 L431.0,202.21 L434.0,201.70 L437.0,201.21 L440.0,200.72 L443.0,200.23 L446.0,199.76 L449.0,199.29 L452.0,198.83 L455.0,198.38 L458.0,197.94 L461.0,197.50 L464.0,197.07 L467.0,196.65 L470.0,196.24 L473.0,195.83 L476.0,195.43 L479.0,195.03 L482.0,194.65 L485.0,194.27 L488.0,193.89 L491.0,193.53 L494.0,193.16 L497.0,192.81 L500.0,192.46 L503.0,192.12 L506.0,191.78 L509.0,191.45 L512.0,191.13 L515.0,190.81 L518.0,190.50 L521.0,190.19 L524.0,189.89 L527.0,189.59 L530.0,189.30 L533.0,189.02 L536.0,188.74 L539.0,188.47 L542.0,188.20 L545.0,187.94 L548.0,187.68 L551.0,187.43 L554.0,187.18 L557.0,186.94 L560.0,186.71 L563.0,186.48 L566.0,186.25 L569.0,186.03 L572.0,185.82 L575.0,185.61 L578.0,185.40 L581.0,185.20 L584.0,185.01 L587.0,184.82 L590.0,184.63 L593.0,184.45 L596.0,184.27 L599.0,184.10 L602.0,183.94 L605.0,183.77 L608.0,183.62 L611.0,183.46 L614.0,183.32 L617.0,183.17 L620.0,183.03 L623.0,182.90 L626.0,182.76 L629.0,182.64 L632.0,182.52 L635.0,182.40 L638.0,182.28 L641.0,182.17 L644.0,182.07 L647.0,181.96 L650.0,181.86 L653.0,181.77 L656.0,181.68 L659.0,181.59 L662.0,181.51 L665.0,181.43 L668.0,181.35 L671.0,181.28 L674.0,181.21 L677.0,181.15 L680.0,181.09 L683.0,181.03 L686.0,180.97 L689.0,180.92 L692.0,180.87 L695.0,180.83 L698.0,180.79 L701.0,180.75 L704.0,180.71 L707.0,180.68 L710.0,180.65 L713.0,180.63 L716.0,180.60 L719.0,180.58 L722.0,180.57 L725.0,180.55 L728.0,180.54 L731.0,180.53 L734.0,180.52 L737.0,180.52 L740.0,180.52 L743.0,180.52 L746.0,180.53 L749.0,180.53 L752.0,180.54 L755.0,180.55 L758.0,180.57 L761.0,180.58 L764.0,180.60 L767.0,180.62 L770.0,180.65 L773.0,180.67 L776.0,180.70 L779.0,180.73 L782.0,180.76 L785.0,180.79 L788.0,180.83 L791.0,180.86 L794.0,180.90 L797.0,180.94 L800.0,180.99 L803.0,181.03 L806.0,181.08 L809.0,181.12 L812.0,181.17 L815.0,181.22 L818.0,181.27 L821.0,181.33 L824.0,181.38 L827.0,181.44 L830.0,181.50 L833.0,181.55 L836.0,181.61 L839.0,181.68 L842.0,181.74 L845.0,181.80 L848.0,181.87 L851.0,181.94 L854.0,182.01 L857.0,182.08 L860.0,182.15 L863.0,182.23 L866.0,182.30 L869.0,182.38 L872.0,182.46 L875.0,182.54 L878.0,182.63 L881.0,182.71 L884.0,182.80 L887.0,182.89 L890.0,182.98 L893.0,183.08 L896.0,183.18 L899.0,183.28 L902.0,183.38 L905.0,183.48 L908.0,183.59 L911.0,183.70 L914.0,183.81 L917.0,183.92 L920.0,184.04 L923.0,184.16 L926.0,184.28 L929.0,184.41 L932.0,184.54 L935.0,184.67 L938.0,184.80 L941.0,184.94 L944.0,185.08 L947.0,185.22 L950.0,185.37 L953.0,185.52 L956.0,185.67 L959.0,185.83 L962.0,185.98 L965.0,186.15 L968.0,186.31 L971.0,186.48 L974.0,186.65 L977.0,186.83 L980.0,187.01 L983.0,187.19 L986.0,187.38 L989.0,187.57 L992.0,187.76 L995.0,187.96 L998.0,188.17 L1001.0,188.37 L1004.0,188.58 L1007.0,188.79 L1010.0,189.01 L1013.0,189.23 L1016.0,189.46 L1019.0,189.69 L1022.0,189.92 L1025.0,190.16 L1028.0,190.41 L1031.0,190.65 L1034.0,190.90 L1037.0,191.16 L1040.0,191.42 L1043.0,191.69 L1046.0,191.96 L1049.0,192.23 L1052.0,192.51 L1055.0,192.79 L1058.0,193.08 L1061.0,193.37 L1064.0,193.67 L1067.0,193.97 L1070.0,194.28 L1073.0,194.59 L1076.0,194.91 L1079.0,195.23 L1082.0,195.56 L1085.0,195.90 L1088.0,196.23 L1091.0,196.58 L1094.0,196.93 L1097.0,197.28 L1100.0,197.64 L1103.0,198.00 L1106.0,198.37 L1109.0,198.75 L1112.0,199.13 L1115.0,199.52 L1118.0,199.91 L1121.0,200.31 L1124.0,200.71 L1127.0,201.12 L1130.0,201.54 L1133.0,201.96 L1136.0,202.39 L1139.0,202.82 L1142.0,203.26 L1145.0,203.71 L1148.0,204.16 L1151.0,204.62 L1154.0,205.08 L1157.0,205.55 L1160.0,206.03 L1163.0,206.51 L1166.0,207.00 L1169.0,207.50 L1172.0,208.00 L1175.0,208.51 L1178.0,209.03 L1181.0,209.55 L1184.0,210.08 L1187.0,210.61 L1190.0,211.15 L1193.0,211.70 L1196.0,212.26 L1199.0,212.82 L1202.0,213.39 L1205.0,213.97 L1208.0,214.55 L1211.0,215.14 L1214.0,215.74 L1217.0,216.35 L1220.0,216.96 L1223.0,217.58 L1226.0,218.20 L1229.0,218.84 L1232.0,219.48 L1235.0,220.13 L1238.0,220.78 L1241.0,221.45 L1244.0,222.12 L1247.0,222.80 L1250.0,223.49 L1253.0,224.18 L1256.0,224.88 L1259.0,225.59 L1262.0,226.31 L1265.0,227.04 L1268.0,227.77 L1271.0,228.51 L1274.0,229.26 L1277.0,230.02 L1280.0,230.79 L1283.0,231.56 L1286.0,232.34 L1289.0,233.13 L1292.0,233.93 L1295.0,234.74 L1298.0,235.56 L1301.0,236.38 L1304.0,237.21 L1307.0,238.05 L1310.0,238.90 L1313.0,239.76 L1316.0,240.63 L1319.0,241.51 L1322.0,242.39 L1325.0,243.29 L1328.0,244.19 L1331.0,245.10 L1334.0,246.03 L1337.0,246.96 L1340.0,247.90 L1343.0,248.85 L1346.0,249.82 L1349.0,250.79 L1352.0,251.77 L1355.0,252.76 L1358.0,253.76 L1361.0,254.78 L1364.0,255.80 L1367.0,256.83 L1370.0,257.88 L1373.0,258.93 L1376.0,260.00 L1379.0,261.08 L1382.0,262.16 L1385.0,263.26 L1388.0,264.37 L1391.0,265.49 L1394.0,266.63 L1397.0,267.77 L1400.0,268.93 L1403.0,270.10 L1406.0,271.28 L1409.0,272.47 L1412.0,273.67 L1415.0,274.89 L1418.0,276.12 L1421.0,277.36 L1424.0,278.61 L1427.0,279.87 L1430.0,281.15 L1433.0,282.44 L1436.0,283.75 L1439.0,285.06 L1442.0,286.39 L1445.0,287.73 L1448.0,289.09 L1451.0,290.46 L1454.0,291.84 L1457.0,293.24 L1460.0,294.64 L1463.0,296.07 L1466.0,297.50 L1469.0,298.95 L1472.0,300.42 L1475.0,301.90 L1478.0,303.39 L1481.0,304.90 L1484.0,306.42 L1487.0,307.95 L1490.0,309.51 L1493.0,311.07 L1496.0,312.65 L1499.0,314.24 L1502.0,315.85 L1505.0,317.48 L1508.0,319.12 L1511.0,320.77 L1514.0,322.44 L1517.0,324.13 L1520.0,325.83 L1523.0,327.55 L1526.0,329.28 L1529.0,331.03 L1532.0,332.79 L1535.0,334.57 L1538.0,336.37 L1541.0,338.18 L1544.0,340.01 L1547.0,341.86 L1550.0,343.72 L1553.0,345.60 L1556.0,347.49 L1559.0,349.40 L1562.0,351.33 L1565.0,353.28 L1568.0,355.24 L1571.0,357.22 L1574.0,359.22 L1576.0,362.00" fill="none" stroke="#1020a0" stroke-width="1.1"/>
<path d="M167.0,435.00 L170.0,437.98 L173.0,439.58 L176.0,441.15 L179.0,442.71 L182.0,444.26 L185.0,445.79 L188.0,447.30 L191.0,448.80 L194.0,450.28 L197.0,451.74 L200.0,453.19 L203.0,454.62 L206.0,456.04 L209.0,457.44 L212.0,458.82 L215.0,460.19 L218.0,461.55 L221.0,462.89 L224.0,464.21 L227.0,465.52 L230.0,466.81 L233.0,468.09 L236.0,469.36 L239.0,470.61 L242.0,471.84 L245.0,473.06 L248.0,474.27 L251.0,475.46 L254.0,476.64 L257.0,477.80 L260.0,478.95 L263.0,480.09 L266.0,481.21 L269.0,482.32 L272.0,483.42 L275.0,484.50 L278.0,485.57 L281.0,486.62 L284.0,487.66 L287.0,488.69 L290.0,489.71 L293.0,490.71 L296.0,491.70 L299.0,492.68 L302.0,493.64 L305.0,494.59 L308.0,495.53 L311.0,496.46 L314.0,497.38 L317.0,498.28 L320.0,499.17 L323.0,500.05 L326.0,500.92 L329.0,501.77 L332.0,502.62 L335.0,503.45 L338.0,504.27 L341.0,505.08 L344.0,505.88 L347.0,506.67 L350.0,507.44 L353.0,508.21 L356.0,508.96 L359.0,509.71 L362.0,510.44 L365.0,511.16 L368.0,511.88 L371.0,512.58 L374.0,513.27 L377.0,513.95 L380.0,514.62 L383.0,515.28 L386.0,515.94 L389.0,516.58 L392.0,517.21 L395.0,517.83 L398.0,518.44 L401.0,519.05 L404.0,519.64 L407.0,520.23 L410.0,520.80 L413.0,521.37 L416.0,521.93 L419.0,522.48 L422.0,523.02 L425.0,523.55 L428.0,524.07 L431.0,524.59 L434.0,525.10 L437.0,525.59 L440.0,526.08 L443.0,526.57 L446.0,527.04 L449.0,527.51 L452.0,527.97 L455.0,528.42 L458.0,528.86 L461.0,529.30 L464.0,529.73 L467.0,530.15 L470.0,530.56 L473.0,530.97 L476.0,531.37 L479.0,531.77 L482.0,532.15 L485.0,532.53 L488.0,532.91 L491.0,533.27 L494.0,533.64 L497.0,533.99 L500.0,534.34 L503.0,534.68 L506.0,535.02 L509.0,535.35 L512.0,535.67 L515.0,535.99 L518.0,536.30 L521.0,536.61 L524.0,536.91 L527.0,537.21 L530.0,537.50 L533.0,537.78 L536.0,538.06 L539.0,538.33 L542.0,538.60 L545.0,538.86 L548.0,539.12 L551.0,539.37 L554.0,539.62 L557.0,539.86 L560.0,540.09 L563.0,540.32 L566.0,540.55 L569.0,540.77 L572.0,540.98 L575.0,541.19 L578.0,541.40 L581.0,541.60 L584.0,541.79 L587.0,541.98 L590.0,542.17 L593.0,542.35 L596.0,542.53 L599.0,542.70 L602.0,542.86 L605.0,543.03 L608.0,543.18 L611.0,543.34 L614.0,543.48 L617.0,543.63 L620.0,543.77 L623.0,543.90 L626.0,544.04 L629.0,544.16 L632.0,544.28 L635.0,544.40 L638.0,544.52 L641.0,544.63 L644.0,544.73 L647.0,544.84 L650.0,544.94 L653.0,545.03 L656.0,545.12 L659.0,545.21 L662.0,545.29 L665.0,545.37 L668.0,545.45 L671.0,545.52 L674.0,545.59 L677.0,545.65 L680.0,545.71 L683.0,545.77 L686.0,545.83 L689.0,545.88 L692.0,545.93 L695.0,545.97 L698.0,546.01 L701.0,546.05 L704.0,546.09 L707.0,546.12 L710.0,546.15 L713.0,546.17 L716.0,546.20 L719.0,546.22 L722.0,546.23 L725.0,546.25 L728.0,546.26 L731.0,546.27 L734.0,546.28 L737.0,546.28 L740.0,546.28 L743.0,546.28 L746.0,546.27 L749.0,546.27 L752.0,546.26 L755.0,546.25 L758.0,546.23 L761.0,546.22 L764.0,546.20 L767.0,546.18 L770.0,546.15 L773.0,546.13 L776.0,546.10 L779.0,546.07 L782.0,546.04 L785.0,546.01 L788.0,545.97 L791.0,545.94 L794.0,545.90 L797.0,545.86 L800.0,545.81 L803.0,545.77 L806.0,545.72 L809.0,545.68 L812.0,545.63 L815.0,545.58 L818.0,545.53 L821.0,545.47 L824.0,545.42 L827.0,545.36 L830.0,545.30 L833.0,545.25 L836.0,545.19 L839.0,545.12 L842.0,545.06 L845.0,545.00 L848.0,544.93 L851.0,544.86 L854.0,544.79 L857.0,544.72 L860.0,544.65 L863.0,544.57 L866.0,544.50 L869.0,544.42 L872.0,544.34 L875.0,544.26 L878.0,544.17 L881.0,544.09 L884.0,544.00 L887.0,543.91 L890.0,543.82 L893.0,543.72 L896.0,543.62 L899.0,543.52 L902.0,543.42 L905.0,543.32 L908.0,543.21 L911.0,543.10 L914.0,542.99 L917.0,542.88 L920.0,542.76 L923.0,542.64 L926.0,542.52 L929.0,542.39 L932.0,542.26 L935.0,542.13 L938.0,542.00 L941.0,541.86 L944.0,541.72 L947.0,541.58 L950.0,541.43 L953.0,541.28 L956.0,541.13 L959.0,540.97 L962.0,540.82 L965.0,540.65 L968.0,540.49 L971.0,540.32 L974.0,540.15 L977.0,539.97 L980.0,539.79 L983.0,539.61 L986.0,539.42 L989.0,539.23 L992.0,539.04 L995.0,538.84 L998.0,538.63 L1001.0,538.43 L1004.0,538.22 L1007.0,538.01 L1010.0,537.79 L1013.0,537.57 L1016.0,537.34 L1019.0,537.11 L1022.0,536.88 L1025.0,536.64 L1028.0,536.39 L1031.0,536.15 L1034.0,535.90 L1037.0,535.64 L1040.0,535.38 L1043.0,535.11 L1046.0,534.84 L1049.0,534.57 L1052.0,534.29 L1055.0,534.01 L1058.0,533.72 L1061.0,533.43 L1064.0,533.13 L1067.0,532.83 L1070.0,532.52 L1073.0,532.21 L1076.0,531.89 L1079.0,531.57 L1082.0,531.24 L1085.0,530.90 L1088.0,530.57 L1091.0,530.22 L1094.0,529.87 L1097.0,529.52 L1100.0,529.16 L1103.0,528.80 L1106.0,528.43 L1109.0,528.05 L1112.0,527.67 L1115.0,527.28 L1118.0,526.89 L1121.0,526.49 L1124.0,526.09 L1127.0,525.68 L1130.0,525.26 L1133.0,524.84 L1136.0,524.41 L1139.0,523.98 L1142.0,523.54 L1145.0,523.09 L1148.0,522.64 L1151.0,522.18 L1154.0,521.72 L1157.0,521.25 L1160.0,520.77 L1163.0,520.29 L1166.0,519.80 L1169.0,519.30 L1172.0,518.80 L1175.0,518.29 L1178.0,517.77 L1181.0,517.25 L1184.0,516.72 L1187.0,516.19 L1190.0,515.65 L1193.0,515.10 L1196.0,514.54 L1199.0,513.98 L1202.0,513.41 L1205.0,512.83 L1208.0,512.25 L1211.0,511.66 L1214.0,511.06 L1217.0,510.45 L1220.0,509.84 L1223.0,509.22 L1226.0,508.60 L1229.0,507.96 L1232.0,507.32 L1235.0,506.67 L1238.0,506.02 L1241.0,505.35 L1244.0,504.68 L1247.0,504.00 L1250.0,503.31 L1253.0,502.62 L1256.0,501.92 L1259.0,501.21 L1262.0,500.49 L1265.0,499.76 L1268.0,499.03 L1271.0,498.29 L1274.0,497.54 L1277.0,496.78 L1280.0,496.01 L1283.0,495.24 L1286.0,494.46 L1289.0,493.67 L1292.0,492.87 L1295.0,492.06 L1298.0,491.24 L1301.0,490.42 L1304.0,489.59 L1307.0,488.75 L1310.0,487.90 L1313.0,487.04 L1316.0,486.17 L1319.0,485.29 L1322.0,484.41 L1325.0,483.51 L1328.0,482.61 L1331.0,481.70 L1334.0,480.77 L1337.0,479.84 L1340.0,478.90 L1343.0,477.95 L1346.0,476.98 L1349.0,476.01 L1352.0,475.03 L1355.0,474.04 L1358.0,473.04 L1361.0,472.02 L1364.0,471.00 L1367.0,469.97 L1370.0,468.92 L1373.0,467.87 L1376.0,466.80 L1379.0,465.72 L1382.0,464.64 L1385.0,463.54 L1388.0,462.43 L1391.0,461.31 L1394.0,460.17 L1397.0,459.03 L1400.0,457.87 L1403.0,456.70 L1406.0,455.52 L1409.0,454.33 L1412.0,453.13 L1415.0,451.91 L1418.0,450.68 L1421.0,449.44 L1424.0,448.19 L1427.0,446.93 L1430.0,445.65 L1433.0,444.36 L1436.0,443.05 L1439.0,441.74 L1442.0,440.41 L1445.0,439.07 L1448.0,437.71 L1451.0,436.34 L1454.0,434.96 L1457.0,433.56 L1460.0,432.16 L1463.0,430.73 L1466.0,429.30 L1469.0,427.85 L1472.0,426.38 L1475.0,424.90 L1478.0,423.41 L1481.0,421.90 L1484.0,420.38 L1487.0,418.85 L1490.0,417.29 L1493.0,415.73 L1496.0,414.15 L1499.0,412.56 L1502.0,410.95 L1505.0,409.32 L1508.0,407.68 L1511.0,406.03 L1514.0,404.36 L1517.0,402.67 L1520.0,400.97 L1523.0,399.25 L1526.0,397.52 L1529.0,395.77 L1532.0,394.01 L1535.0,392.23 L1538.0,390.43 L1541.0,388.62 L1544.0,386.79 L1547.0,384.94 L1550.0,383.08 L1553.0,381.20 L1556.0,379.31 L1559.0,377.40 L1562.0,375.47 L1565.0,373.52 L1568.0,371.56 L1571.0,369.58 L1574.0,367.58 L1576.0,364.80" fill="none" stroke="#1020a0" stroke-width="1.1"/>
<path d="M142.2,363.4 C142.2,361.2 142.2,354.7 142.4,350.0 C142.6,345.3 142.9,339.6 143.5,335.0 C144.1,330.4 144.8,326.3 146.0,322.5 C147.2,318.7 148.7,315.6 150.5,312.0 C152.3,308.4 154.2,304.4 157.0,301.0 C159.8,297.6 165.3,293.3 167.0,291.8" fill="none" stroke="#1a1a1a" stroke-width="1.2"/>
<path d="M142.2,363.4 C142.2,365.6 142.2,372.1 142.4,376.8 C142.6,381.5 142.9,387.2 143.5,391.8 C144.1,396.4 144.8,400.5 146.0,404.3 C147.2,408.1 148.7,411.2 150.5,414.8 C152.3,418.4 154.2,422.4 157.0,425.8 C159.8,429.2 165.3,433.5 167.0,435.0" fill="none" stroke="#1a1a1a" stroke-width="1.2"/>
<path d="M167.0,291.80 L170.0,289.31 L173.0,287.68 L176.0,286.07 L179.0,284.48 L182.0,282.90 L185.0,281.35 L188.0,279.81 L191.0,278.28 L194.0,276.78 L197.0,275.29 L200.0,273.82 L203.0,272.36 L206.0,270.92 L209.0,269.50 L212.0,268.09 L215.0,266.70 L218.0,265.33 L221.0,263.97 L224.0,262.62 L227.0,261.29 L230.0,259.98 L233.0,258.68 L236.0,257.40 L239.0,256.13 L242.0,254.88 L245.0,253.64 L248.0,252.42 L251.0,251.21 L254.0,250.01 L257.0,248.83 L260.0,247.66 L263.0,246.51 L266.0,245.37 L269.0,244.24 L272.0,243.13 L275.0,242.03 L278.0,240.94 L281.0,239.87 L284.0,238.81 L287.0,237.76 L290.0,236.72 L293.0,235.70 L296.0,234.69 L299.0,233.69 L302.0,232.71 L305.0,231.73 L308.0,230.77 L311.0,229.82 L314.0,228.88 L317.0,227.95 L320.0,227.03 L323.0,226.12 L326.0,225.23 L329.0,224.34 L332.0,223.47 L335.0,222.60 L338.0,221.75 L341.0,220.91 L344.0,220.07 L347.0,219.25 L350.0,218.44 L353.0,217.63 L356.0,216.84 L359.0,216.05 L362.0,215.28 L365.0,214.51 L368.0,213.76 L371.0,213.01 L374.0,212.27 L377.0,211.54 L380.0,210.81 L383.0,210.10 L386.0,209.39 L389.0,208.69 L392.0,208.00 L395.0,207.32 L398.0,206.64 L401.0,205.98 L404.0,205.32 L407.0,204.66 L410.0,204.02 L413.0,203.38 L416.0,202.74 L419.0,202.12 L422.0,201.50 L425.0,200.88 L428.0,200.28 L431.0,199.68 L434.0,199.08 L437.0,198.49 L440.0,197.91 L443.0,197.33 L446.0,196.76 L449.0,196.20 L452.0,195.64 L455.0,195.08 L458.0,194.54 L461.0,193.99 L464.0,193.46 L467.0,192.93 L470.0,192.40 L473.0,191.88 L476.0,191.37 L479.0,190.86 L482.0,190.36 L485.0,189.86 L488.0,189.37 L491.0,188.89 L494.0,188.41 L497.0,187.93 L500.0,187.46 L503.0,187.00 L506.0,186.54 L509.0,186.09 L512.0,185.64 L515.0,185.20 L518.0,184.77 L521.0,184.34 L524.0,183.91 L527.0,183.49 L530.0,183.08 L533.0,182.67 L536.0,182.26 L539.0,181.86 L542.0,181.47 L545.0,181.08 L548.0,180.70 L551.0,180.32 L554.0,179.95 L557.0,179.58 L560.0,179.22 L563.0,178.86 L566.0,178.50 L569.0,178.16 L572.0,177.81 L575.0,177.48 L578.0,177.14 L581.0,176.82 L584.0,176.49 L587.0,176.17 L590.0,175.86 L593.0,175.55 L596.0,175.25 L599.0,174.95 L602.0,174.66 L605.0,174.37 L608.0,174.08 L611.0,173.80 L614.0,173.53 L617.0,173.26 L620.0,172.99 L623.0,172.73 L626.0,172.47 L629.0,172.22 L632.0,171.97 L635.0,171.73 L638.0,171.49 L641.0,171.26 L644.0,171.03 L647.0,170.81 L650.0,170.58 L653.0,170.37 L656.0,170.16 L659.0,169.95 L662.0,169.75 L665.0,169.55 L668.0,169.35 L671.0,169.17 L674.0,168.98 L677.0,168.80 L680.0,168.62 L683.0,168.45 L686.0,168.28 L689.0,168.12 L692.0,167.95 L695.0,167.80 L698.0,167.65 L701.0,167.50 L704.0,167.35 L707.0,167.21 L710.0,167.08 L713.0,166.95 L716.0,166.82 L719.0,166.69 L722.0,166.57 L725.0,166.46 L728.0,166.35 L731.0,166.24 L734.0,166.13 L737.0,166.03 L740.0,165.94 L743.0,165.84 L746.0,165.75 L749.0,165.67 L752.0,165.59 L755.0,165.51 L758.0,165.43 L761.0,165.36 L764.0,165.29 L767.0,165.23 L770.0,165.17 L773.0,165.11 L776.0,165.06 L779.0,165.01 L782.0,164.97 L785.0,164.92 L788.0,164.88 L791.0,164.85 L794.0,164.82 L797.0,164.79 L800.0,164.76 L803.0,164.74 L806.0,164.72 L809.0,164.71 L812.0,164.69 L815.0,164.69 L818.0,164.68 L821.0,164.68 L824.0,164.68 L827.0,164.68 L830.0,164.69 L833.0,164.70 L836.0,164.71 L839.0,164.73 L842.0,164.75 L845.0,164.78 L848.0,164.80 L851.0,164.83 L854.0,164.87 L857.0,164.90 L860.0,164.94 L863.0,164.99 L866.0,165.03 L869.0,165.08 L872.0,165.14 L875.0,165.20 L878.0,165.26 L881.0,165.32 L884.0,165.39 L887.0,165.47 L890.0,165.54 L893.0,165.62 L896.0,165.71 L899.0,165.79 L902.0,165.88 L905.0,165.98 L908.0,166.08 L911.0,166.18 L914.0,166.29 L917.0,166.40 L920.0,166.52 L923.0,166.63 L926.0,166.76 L929.0,166.89 L932.0,167.02 L935.0,167.15 L938.0,167.29 L941.0,167.44 L944.0,167.58 L947.0,167.74 L950.0,167.89 L953.0,168.05 L956.0,168.22 L959.0,168.39 L962.0,168.56 L965.0,168.74 L968.0,168.93 L971.0,169.11 L974.0,169.31 L977.0,169.50 L980.0,169.70 L983.0,169.91 L986.0,170.12 L989.0,170.34 L992.0,170.56 L995.0,170.78 L998.0,171.01 L1001.0,171.25 L1004.0,171.49 L1007.0,171.73 L1010.0,171.98 L1013.0,172.23 L1016.0,172.49 L1019.0,172.75 L1022.0,173.02 L1025.0,173.30 L1028.0,173.58 L1031.0,173.86 L1034.0,174.15 L1037.0,174.44 L1040.0,174.74 L1043.0,175.05 L1046.0,175.36 L1049.0,175.67 L1052.0,175.99 L1055.0,176.32 L1058.0,176.65 L1061.0,176.98 L1064.0,177.32 L1067.0,177.67 L1070.0,178.02 L1073.0,178.38 L1076.0,178.75 L1079.0,179.11 L1082.0,179.49 L1085.0,179.87 L1088.0,180.26 L1091.0,180.65 L1094.0,181.04 L1097.0,181.45 L1100.0,181.86 L1103.0,182.27 L1106.0,182.69 L1109.0,183.12 L1112.0,183.55 L1115.0,183.99 L1118.0,184.43 L1121.0,184.88 L1124.0,185.33 L1127.0,185.80 L1130.0,186.26 L1133.0,186.74 L1136.0,187.22 L1139.0,187.70 L1142.0,188.20 L1145.0,188.69 L1148.0,189.20 L1151.0,189.71 L1154.0,190.23 L1157.0,190.75 L1160.0,191.28 L1163.0,191.81 L1166.0,192.36 L1169.0,192.90 L1172.0,193.46 L1175.0,194.02 L1178.0,194.59 L1181.0,195.16 L1184.0,195.74 L1187.0,196.33 L1190.0,196.93 L1193.0,197.53 L1196.0,198.14 L1199.0,198.75 L1202.0,199.37 L1205.0,200.00 L1208.0,200.63 L1211.0,201.27 L1214.0,201.92 L1217.0,202.58 L1220.0,203.24 L1223.0,203.91 L1226.0,204.58 L1229.0,205.27 L1232.0,205.96 L1235.0,206.65 L1238.0,207.36 L1241.0,208.07 L1244.0,208.79 L1247.0,209.51 L1250.0,210.24 L1253.0,210.98 L1256.0,211.73 L1259.0,212.48 L1262.0,213.25 L1265.0,214.01 L1268.0,214.79 L1271.0,215.57 L1274.0,216.37 L1277.0,217.16 L1280.0,217.97 L1283.0,218.78 L1286.0,219.60 L1289.0,220.43 L1292.0,221.27 L1295.0,222.11 L1298.0,222.96 L1301.0,223.82 L1304.0,224.69 L1307.0,225.56 L1310.0,226.45 L1313.0,227.34 L1316.0,228.23 L1319.0,229.14 L1322.0,230.05 L1325.0,230.97 L1328.0,231.90 L1331.0,232.84 L1334.0,233.79 L1337.0,234.74 L1340.0,235.70 L1343.0,236.67 L1346.0,237.65 L1349.0,238.63 L1352.0,239.63 L1355.0,240.63 L1358.0,241.64 L1361.0,242.66 L1364.0,243.68 L1367.0,244.72 L1370.0,245.77 L1373.0,246.82 L1376.0,247.89 L1379.0,248.96 L1382.0,250.05 L1385.0,251.14 L1388.0,252.25 L1391.0,253.37 L1394.0,254.50 L1397.0,255.64 L1400.0,256.80 L1403.0,257.96 L1406.0,259.14 L1409.0,260.34 L1412.0,261.55 L1415.0,262.77 L1418.0,264.00 L1421.0,265.26 L1424.0,266.52 L1427.0,267.80 L1430.0,269.10 L1433.0,270.41 L1436.0,271.74 L1439.0,273.08 L1442.0,274.45 L1445.0,275.82 L1448.0,277.22 L1451.0,278.64 L1454.0,280.07 L1457.0,281.52 L1460.0,282.99 L1463.0,284.48 L1466.0,285.99 L1469.0,287.51 L1472.0,289.06 L1475.0,290.63 L1478.0,292.22 L1481.0,293.83 L1484.0,295.46 L1487.0,297.11 L1490.0,298.79 L1493.0,300.49 L1496.0,302.21 L1499.0,303.96 L1502.0,305.73 L1505.0,307.53 L1508.0,309.36 L1511.0,311.21 L1514.0,313.09 L1517.0,315.00 L1520.0,316.94 L1523.0,318.90 L1526.0,320.90 L1529.0,322.93 L1532.0,324.99 L1535.0,327.08 L1538.0,329.20 L1541.0,331.36 L1544.0,333.55 L1547.0,335.77 L1550.0,338.03 L1553.0,340.33 L1556.0,342.66 L1559.0,345.03 L1562.0,347.43 L1565.0,349.88 L1568.0,352.36 L1571.0,354.88 L1574.0,357.44 L1576.0,360.00" fill="none" stroke="#1a1a1a" stroke-width="1.2"/>
<path d="M167.0,435.00 L170.0,437.49 L173.0,439.12 L176.0,440.73 L179.0,442.32 L182.0,443.90 L185.0,445.45 L188.0,446.99 L191.0,448.52 L194.0,450.02 L197.0,451.51 L200.0,452.98 L203.0,454.44 L206.0,455.88 L209.0,457.30 L212.0,458.71 L215.0,460.10 L218.0,461.47 L221.0,462.83 L224.0,464.18 L227.0,465.51 L230.0,466.82 L233.0,468.12 L236.0,469.40 L239.0,470.67 L242.0,471.92 L245.0,473.16 L248.0,474.38 L251.0,475.59 L254.0,476.79 L257.0,477.97 L260.0,479.14 L263.0,480.29 L266.0,481.43 L269.0,482.56 L272.0,483.67 L275.0,484.77 L278.0,485.86 L281.0,486.93 L284.0,487.99 L287.0,489.04 L290.0,490.08 L293.0,491.10 L296.0,492.11 L299.0,493.11 L302.0,494.09 L305.0,495.07 L308.0,496.03 L311.0,496.98 L314.0,497.92 L317.0,498.85 L320.0,499.77 L323.0,500.68 L326.0,501.57 L329.0,502.46 L332.0,503.33 L335.0,504.20 L338.0,505.05 L341.0,505.89 L344.0,506.73 L347.0,507.55 L350.0,508.36 L353.0,509.17 L356.0,509.96 L359.0,510.75 L362.0,511.52 L365.0,512.29 L368.0,513.04 L371.0,513.79 L374.0,514.53 L377.0,515.26 L380.0,515.99 L383.0,516.70 L386.0,517.41 L389.0,518.11 L392.0,518.80 L395.0,519.48 L398.0,520.16 L401.0,520.82 L404.0,521.48 L407.0,522.14 L410.0,522.78 L413.0,523.42 L416.0,524.06 L419.0,524.68 L422.0,525.30 L425.0,525.92 L428.0,526.52 L431.0,527.12 L434.0,527.72 L437.0,528.31 L440.0,528.89 L443.0,529.47 L446.0,530.04 L449.0,530.60 L452.0,531.16 L455.0,531.72 L458.0,532.26 L461.0,532.81 L464.0,533.34 L467.0,533.87 L470.0,534.40 L473.0,534.92 L476.0,535.43 L479.0,535.94 L482.0,536.44 L485.0,536.94 L488.0,537.43 L491.0,537.91 L494.0,538.39 L497.0,538.87 L500.0,539.34 L503.0,539.80 L506.0,540.26 L509.0,540.71 L512.0,541.16 L515.0,541.60 L518.0,542.03 L521.0,542.46 L524.0,542.89 L527.0,543.31 L530.0,543.72 L533.0,544.13 L536.0,544.54 L539.0,544.94 L542.0,545.33 L545.0,545.72 L548.0,546.10 L551.0,546.48 L554.0,546.85 L557.0,547.22 L560.0,547.58 L563.0,547.94 L566.0,548.30 L569.0,548.64 L572.0,548.99 L575.0,549.32 L578.0,549.66 L581.0,549.98 L584.0,550.31 L587.0,550.63 L590.0,550.94 L593.0,551.25 L596.0,551.55 L599.0,551.85 L602.0,552.14 L605.0,552.43 L608.0,552.72 L611.0,553.00 L614.0,553.27 L617.0,553.54 L620.0,553.81 L623.0,554.07 L626.0,554.33 L629.0,554.58 L632.0,554.83 L635.0,555.07 L638.0,555.31 L641.0,555.54 L644.0,555.77 L647.0,555.99 L650.0,556.22 L653.0,556.43 L656.0,556.64 L659.0,556.85 L662.0,557.05 L665.0,557.25 L668.0,557.45 L671.0,557.63 L674.0,557.82 L677.0,558.00 L680.0,558.18 L683.0,558.35 L686.0,558.52 L689.0,558.68 L692.0,558.85 L695.0,559.00 L698.0,559.15 L701.0,559.30 L704.0,559.45 L707.0,559.59 L710.0,559.72 L713.0,559.85 L716.0,559.98 L719.0,560.11 L722.0,560.23 L725.0,560.34 L728.0,560.45 L731.0,560.56 L734.0,560.67 L737.0,560.77 L740.0,560.86 L743.0,560.96 L746.0,561.05 L749.0,561.13 L752.0,561.21 L755.0,561.29 L758.0,561.37 L761.0,561.44 L764.0,561.51 L767.0,561.57 L770.0,561.63 L773.0,561.69 L776.0,561.74 L779.0,561.79 L782.0,561.83 L785.0,561.88 L788.0,561.92 L791.0,561.95 L794.0,561.98 L797.0,562.01 L800.0,562.04 L803.0,562.06 L806.0,562.08 L809.0,562.09 L812.0,562.11 L815.0,562.11 L818.0,562.12 L821.0,562.12 L824.0,562.12 L827.0,562.12 L830.0,562.11 L833.0,562.10 L836.0,562.09 L839.0,562.07 L842.0,562.05 L845.0,562.02 L848.0,562.00 L851.0,561.97 L854.0,561.93 L857.0,561.90 L860.0,561.86 L863.0,561.81 L866.0,561.77 L869.0,561.72 L872.0,561.66 L875.0,561.60 L878.0,561.54 L881.0,561.48 L884.0,561.41 L887.0,561.33 L890.0,561.26 L893.0,561.18 L896.0,561.09 L899.0,561.01 L902.0,560.92 L905.0,560.82 L908.0,560.72 L911.0,560.62 L914.0,560.51 L917.0,560.40 L920.0,560.28 L923.0,560.17 L926.0,560.04 L929.0,559.91 L932.0,559.78 L935.0,559.65 L938.0,559.51 L941.0,559.36 L944.0,559.22 L947.0,559.06 L950.0,558.91 L953.0,558.75 L956.0,558.58 L959.0,558.41 L962.0,558.24 L965.0,558.06 L968.0,557.87 L971.0,557.69 L974.0,557.49 L977.0,557.30 L980.0,557.10 L983.0,556.89 L986.0,556.68 L989.0,556.46 L992.0,556.24 L995.0,556.02 L998.0,555.79 L1001.0,555.55 L1004.0,555.31 L1007.0,555.07 L1010.0,554.82 L1013.0,554.57 L1016.0,554.31 L1019.0,554.05 L1022.0,553.78 L1025.0,553.50 L1028.0,553.22 L1031.0,552.94 L1034.0,552.65 L1037.0,552.36 L1040.0,552.06 L1043.0,551.75 L1046.0,551.44 L1049.0,551.13 L1052.0,550.81 L1055.0,550.48 L1058.0,550.15 L1061.0,549.82 L1064.0,549.48 L1067.0,549.13 L1070.0,548.78 L1073.0,548.42 L1076.0,548.05 L1079.0,547.69 L1082.0,547.31 L1085.0,546.93 L1088.0,546.54 L1091.0,546.15 L1094.0,545.76 L1097.0,545.35 L1100.0,544.94 L1103.0,544.53 L1106.0,544.11 L1109.0,543.68 L1112.0,543.25 L1115.0,542.81 L1118.0,542.37 L1121.0,541.92 L1124.0,541.47 L1127.0,541.00 L1130.0,540.54 L1133.0,540.06 L1136.0,539.58 L1139.0,539.10 L1142.0,538.60 L1145.0,538.11 L1148.0,537.60 L1151.0,537.09 L1154.0,536.57 L1157.0,536.05 L1160.0,535.52 L1163.0,534.99 L1166.0,534.44 L1169.0,533.90 L1172.0,533.34 L1175.0,532.78 L1178.0,532.21 L1181.0,531.64 L1184.0,531.06 L1187.0,530.47 L1190.0,529.87 L1193.0,529.27 L1196.0,528.66 L1199.0,528.05 L1202.0,527.43 L1205.0,526.80 L1208.0,526.17 L1211.0,525.53 L1214.0,524.88 L1217.0,524.22 L1220.0,523.56 L1223.0,522.89 L1226.0,522.22 L1229.0,521.53 L1232.0,520.84 L1235.0,520.15 L1238.0,519.44 L1241.0,518.73 L1244.0,518.01 L1247.0,517.29 L1250.0,516.56 L1253.0,515.82 L1256.0,515.07 L1259.0,514.32 L1262.0,513.55 L1265.0,512.79 L1268.0,512.01 L1271.0,511.23 L1274.0,510.43 L1277.0,509.64 L1280.0,508.83 L1283.0,508.02 L1286.0,507.20 L1289.0,506.37 L1292.0,505.53 L1295.0,504.69 L1298.0,503.84 L1301.0,502.98 L1304.0,502.11 L1307.0,501.24 L1310.0,500.35 L1313.0,499.46 L1316.0,498.57 L1319.0,497.66 L1322.0,496.75 L1325.0,495.83 L1328.0,494.90 L1331.0,493.96 L1334.0,493.01 L1337.0,492.06 L1340.0,491.10 L1343.0,490.13 L1346.0,489.15 L1349.0,488.17 L1352.0,487.17 L1355.0,486.17 L1358.0,485.16 L1361.0,484.14 L1364.0,483.12 L1367.0,482.08 L1370.0,481.03 L1373.0,479.98 L1376.0,478.91 L1379.0,477.84 L1382.0,476.75 L1385.0,475.66 L1388.0,474.55 L1391.0,473.43 L1394.0,472.30 L1397.0,471.16 L1400.0,470.00 L1403.0,468.84 L1406.0,467.66 L1409.0,466.46 L1412.0,465.25 L1415.0,464.03 L1418.0,462.80 L1421.0,461.54 L1424.0,460.28 L1427.0,459.00 L1430.0,457.70 L1433.0,456.39 L1436.0,455.06 L1439.0,453.72 L1442.0,452.35 L1445.0,450.98 L1448.0,449.58 L1451.0,448.16 L1454.0,446.73 L1457.0,445.28 L1460.0,443.81 L1463.0,442.32 L1466.0,440.81 L1469.0,439.29 L1472.0,437.74 L1475.0,436.17 L1478.0,434.58 L1481.0,432.97 L1484.0,431.34 L1487.0,429.69 L1490.0,428.01 L1493.0,426.31 L1496.0,424.59 L1499.0,422.84 L1502.0,421.07 L1505.0,419.27 L1508.0,417.44 L1511.0,415.59 L1514.0,413.71 L1517.0,411.80 L1520.0,409.86 L1523.0,407.90 L1526.0,405.90 L1529.0,403.87 L1532.0,401.81 L1535.0,399.72 L1538.0,397.60 L1541.0,395.44 L1544.0,393.25 L1547.0,391.03 L1550.0,388.77 L1553.0,386.47 L1556.0,384.14 L1559.0,381.77 L1562.0,379.37 L1565.0,376.92 L1568.0,374.44 L1571.0,371.92 L1574.0,369.36 L1576.0,366.80" fill="none" stroke="#1a1a1a" stroke-width="1.2"/>
<line x1="1576" y1="360" x2="1576" y2="366.8" stroke="#1a1a1a" stroke-width="1.2" />
<rect x="164.5" y="353.5" width="32" height="20.5" fill="none" stroke="#333" stroke-width="1.1" rx="10" />
<rect x="198.5" y="349.5" width="126" height="28" fill="none" stroke="#333" stroke-width="1.1" rx="14" />
<rect x="206" y="358" width="110.5" height="11.3" fill="none" stroke="#333" stroke-width="1.1" rx="5.6" />
<circle cx="210.5" cy="363.6" r="1.6" fill="#000"/>
<rect x="-13.2" y="-13.2" width="127.52368664165681" height="26.4" rx="13.2" fill="none" stroke="#333" stroke-width="1.1" transform="translate(364.5,239.2) rotate(2.834)"/>
<rect x="-5.5" y="-5.5" width="111.13510872815787" height="11.0" rx="5.5" fill="none" stroke="#333" stroke-width="1.1" transform="translate(364.5,239.8) rotate(2.977)"/>
<circle cx="364" cy="242.3" r="1.6" fill="#000"/>
<line x1="351.7" y1="238.8" x2="1706" y2="303.5" stroke="#111" stroke-width="1" stroke-dasharray="2.2,1.8"/>
<rect x="-13.2" y="-13.2" width="127.52368664165681" height="26.4" rx="13.2" fill="none" stroke="#333" stroke-width="1.1" transform="translate(364.5,487.59999999999997) rotate(-2.834)"/>
<rect x="-5.5" y="-5.5" width="111.13510872815787" height="11.0" rx="5.5" fill="none" stroke="#333" stroke-width="1.1" transform="translate(364.5,486.99999999999994) rotate(-2.977)"/>
<circle cx="364" cy="484.49999999999994" r="1.6" fill="#000"/>
<line x1="351.7" y1="487.99999999999994" x2="1706" y2="423.29999999999995" stroke="#111" stroke-width="1" stroke-dasharray="2.2,1.8"/>
<circle cx="142.5" cy="352" r="2.7" fill="#fff" stroke="#222" stroke-width="1.1"/>
<circle cx="167" cy="291.8" r="2.7" fill="#fff" stroke="#222" stroke-width="1.1"/>
<circle cx="361.5" cy="215.8" r="2.7" fill="#fff" stroke="#222" stroke-width="1.1"/>
<circle cx="828" cy="164.4" r="2.7" fill="#fff" stroke="#222" stroke-width="1.1"/>
<circle cx="1357.7" cy="240.6" r="2.7" fill="#fff" stroke="#222" stroke-width="1.1"/>
<circle cx="1576.2" cy="359.8" r="2.7" fill="#fff" stroke="#222" stroke-width="1.1"/>
<line x1="167.3" y1="292" x2="167.3" y2="435" stroke="#ff0000" stroke-width="1.2" />
</svg>
<line x1="18" y1="570" x2="18" y2="542" stroke="#20d020" stroke-width="1.2" />
<line x1="18" y1="570" x2="49" y2="570" stroke="#ff2020" stroke-width="1.2" />
<path d="M13,547 L18,542 L23,547" fill="none" stroke="#20d020" stroke-width="1"/>
<path d="M44,565 L49,570 L44,575" fill="none" stroke="#ff2020" stroke-width="1"/>
<text x="14.5" y="539" font-size="10" fill="#20d020" text-anchor="start" font-weight="normal" >Y</text>
<text x="52" y="574" font-size="10" fill="#ff2020" text-anchor="start" font-weight="normal" >X</text>
<text x="17" y="158.7" font-size="10.5" fill="#0a0a50" text-anchor="start" font-weight="normal"  stroke="#0a0a50" stroke-width="0.3" textLength="100.5" lengthAdjust="spacingAndGlyphs">Surface proj.:  6.53 ft²</text>
<text x="17.3" y="170.8" font-size="10.5" fill="#0a0a50" text-anchor="start" font-weight="normal"  stroke="#0a0a50" stroke-width="0.3" textLength="86.5" lengthAdjust="spacingAndGlyphs">Av. width: 14 7/64"</text>
<text x="1573.3" y="159" font-size="10.5" fill="#0a0a50" text-anchor="start" font-weight="normal"  stroke="#0a0a50" stroke-width="0.3" textLength="127.7" lengthAdjust="spacingAndGlyphs">Effective Length*: 4'11 3/16"</text>
<text x="1609.2" y="170.8" font-size="10.5" fill="#0a0a50" text-anchor="start" font-weight="normal"  stroke="#0a0a50" stroke-width="0.3" textLength="91.8" lengthAdjust="spacingAndGlyphs">Eff. Volume:  23.56 L</text>
<text x="1607.6" y="182.9" font-size="10.5" fill="#0a0a50" text-anchor="start" font-weight="normal"  stroke="#0a0a50" stroke-width="0.3" textLength="93" lengthAdjust="spacingAndGlyphs">Eff. Surface:  6.27 ft²</text>
<text x="1404.7" y="574.7" font-size="10.5" fill="#0a0a50" text-anchor="start" font-weight="normal"  stroke="#0a0a50" stroke-width="0.3" textLength="296" lengthAdjust="spacingAndGlyphs">Aspect Ratio (lng²/srf.):  4.72, Prismatic Coef. (srf./wdt*lng):  0.76</text>
<line x1="12" y1="770.2" x2="1706" y2="770.2" stroke="#b4b4b4" stroke-width="1" />
<path d="M143.0,651.0 C165.8,650.5 223.8,649.2 280.0,648.1 C336.2,647.0 410.0,645.5 480.0,644.6 C550.0,643.8 636.8,643.3 700.0,643.0 C763.2,642.7 806.1,642.6 859.4,642.6 C912.7,642.6 956.6,642.7 1020.0,643.0 C1083.4,643.3 1170.0,643.8 1240.0,644.6 C1310.0,645.5 1384.6,646.9 1440.0,648.1 C1495.4,649.3 1550.2,651.1 1572.3,651.7 C1598,652 1629.4,670 1629.4,718 L1629.4,771.2 L1629.4,771.2 C1597.8,770.3 1504.9,766.9 1440.0,765.6 C1375.1,764.3 1310.0,763.1 1240.0,763.5 C1170.0,763.9 1083.4,766.7 1020.0,767.7 C956.6,768.8 912.7,769.8 859.4,769.8 C806.1,769.8 763.2,768.8 700.0,767.7 C636.8,766.7 550.0,763.9 480.0,763.5 C410.0,763.1 345.1,764.4 280.0,765.6 C214.9,766.8 121.3,770.0 89.6,770.9 L89.6,712 C89.6,670 110,652 143,651 Z" fill="#fff" stroke="#1a1a1a" stroke-width="1.1"/>
<rect x="856.5" y="639.5" width="6" height="6" fill="#5a5a90" />
<rect x="856.5" y="766.8" width="6" height="6" fill="#5a5a90" />
<circle cx="1572.3" cy="651.7" r="2.6" fill="#fff" stroke="#333" stroke-width="1"/>
<circle cx="1629.4" cy="722.9" r="2.6" fill="#20e020"/>
<circle cx="1629.4" cy="771.2" r="2.6" fill="#1010ff"/>
<text x="833.3" y="636" font-size="10.5" fill="#000" text-anchor="start" font-weight="normal"  stroke="#000" stroke-width="0.3" textLength="56.6" lengthAdjust="spacingAndGlyphs">Stringer Top</text>
<text x="834.1" y="782.9" font-size="10.5" fill="#000" text-anchor="start" font-weight="normal"  stroke="#000" stroke-width="0.3" textLength="54.1" lengthAdjust="spacingAndGlyphs">Stringer Bot</text>
<text x="1577.4" y="645" font-size="10.5" fill="#ff8a10" text-anchor="start" font-weight="normal"  textLength="30" lengthAdjust="spacingAndGlyphs">Deck 1</text>
<text x="1634.5" y="726" font-size="10.5" fill="#108010" text-anchor="start" font-weight="normal"  textLength="22" lengthAdjust="spacingAndGlyphs">Apex</text>
<text x="1634" y="783.8" font-size="10.5" fill="#0a0a50" text-anchor="start" font-weight="normal"  stroke="#0a0a50" stroke-width="0.3" textLength="15" lengthAdjust="spacingAndGlyphs">Rail</text>
<text x="822" y="698.7" font-size="10" fill="#5a5a6a" text-anchor="start" font-weight="normal"  textLength="72.8" lengthAdjust="spacingAndGlyphs">Surface: 0.02 ft²</text>
<text x="787.5" y="719" font-size="10" fill="#5a5a6a" text-anchor="start" font-weight="normal"  textLength="141" lengthAdjust="spacingAndGlyphs">AR (w/t): 12.01 PC (S/wt): 0.93</text>
<text x="17.4" y="603.7" font-size="10.5" fill="#0a0a50" text-anchor="start" font-weight="normal"  stroke="#0a0a50" stroke-width="0.3" textLength="197" lengthAdjust="spacingAndGlyphs">Av. V/Concave Tail: -0.1028" Nose: -0.0567"</text>
<text x="17.4" y="615.2" font-size="10.5" fill="#0a0a50" text-anchor="start" font-weight="normal"  stroke="#0a0a50" stroke-width="0.3" textLength="165" lengthAdjust="spacingAndGlyphs">Av. Slice PC** Tail:  0.81 Nose:  0.83</text>
<text x="1590" y="603.9" font-size="10.5" fill="#0a0a50" text-anchor="start" font-weight="normal"  stroke="#0a0a50" stroke-width="0.3" textLength="110.6" lengthAdjust="spacingAndGlyphs">Eff. V/Concave: -0.0444"</text>
<text x="1607.5" y="615.7" font-size="10.5" fill="#0a0a50" text-anchor="start" font-weight="normal"  stroke="#0a0a50" stroke-width="0.3" textLength="93" lengthAdjust="spacingAndGlyphs">Eff. Slice PC**:  0.82</text>
<text x="1621.4" y="627.7" font-size="10.5" fill="#0a0a50" text-anchor="start" font-weight="normal"  stroke="#0a0a50" stroke-width="0.3" textLength="79.1" lengthAdjust="spacingAndGlyphs">Surf-ID***:  62.0</text>
<line x1="18" y1="812" x2="18" y2="782" stroke="#1010ff" stroke-width="1.2" />
<line x1="18" y1="812" x2="49" y2="812" stroke="#20e020" stroke-width="1.2" />
<path d="M13,787 L18,782 L23,787" fill="none" stroke="#1010ff" stroke-width="1"/>
<path d="M44,807 L49,812 L44,817" fill="none" stroke="#20e020" stroke-width="1"/>
<text x="14.5" y="779" font-size="10" fill="#1010ff" text-anchor="start" font-weight="normal" >Z</text>
<text x="52" y="816" font-size="10" fill="#20e020" text-anchor="start" font-weight="normal" >Y</text>
<line x1="12" y1="970.3" x2="1706" y2="970.3" stroke="#8a8a8a" stroke-width="1" />
<line x1="354" y1="940" x2="354" y2="970" stroke="#b0b0b0" stroke-width="1" stroke-dasharray="3,2"/>
<line x1="829.6" y1="920" x2="829.6" y2="970" stroke="#b0b0b0" stroke-width="1" stroke-dasharray="3,2"/>
<line x1="1395.5" y1="940" x2="1395.5" y2="970" stroke="#b0b0b0" stroke-width="1" stroke-dasharray="3,2"/>
<path d="M89.5,959.80 L92.5,959.13 L95.5,958.84 L98.5,958.55 L101.5,958.26 L104.5,957.97 L107.5,957.68 L110.5,957.40 L113.5,957.11 L116.5,956.82 L119.5,956.54 L122.5,956.26 L125.5,955.97 L128.5,955.69 L131.5,955.41 L134.5,955.13 L137.5,954.85 L140.5,954.57 L143.5,954.30 L146.5,954.02 L149.5,953.74 L152.5,953.47 L155.5,953.20 L158.5,952.92 L161.5,952.65 L164.5,952.38 L167.5,952.11 L170.5,951.84 L173.5,951.57 L176.5,951.31 L179.5,951.04 L182.5,950.77 L185.5,950.51 L188.5,950.25 L191.5,949.98 L194.5,949.72 L197.5,949.46 L200.5,949.20 L203.5,948.94 L206.5,948.68 L209.5,948.43 L212.5,948.17 L215.5,947.92 L218.5,947.66 L221.5,947.41 L224.5,947.16 L227.5,946.90 L230.5,946.65 L233.5,946.40 L236.5,946.16 L239.5,945.91 L242.5,945.66 L245.5,945.42 L248.5,945.17 L251.5,944.93 L254.5,944.68 L257.5,944.44 L260.5,944.20 L263.5,943.96 L266.5,943.72 L269.5,943.49 L272.5,943.25 L275.5,943.01 L278.5,942.78 L281.5,942.54 L284.5,942.31 L287.5,942.08 L290.5,941.85 L293.5,941.62 L296.5,941.39 L299.5,941.16 L302.5,940.93 L305.5,940.71 L308.5,940.48 L311.5,940.26 L314.5,940.03 L317.5,939.81 L320.5,939.59 L323.5,939.37 L326.5,939.15 L329.5,938.93 L332.5,938.72 L335.5,938.50 L338.5,938.29 L341.5,938.07 L344.5,937.86 L347.5,937.65 L350.5,937.43 L353.5,937.22 L356.5,937.02 L359.5,936.81 L362.5,936.60 L365.5,936.40 L368.5,936.19 L371.5,935.99 L374.5,935.78 L377.5,935.58 L380.5,935.38 L383.5,935.18 L386.5,934.98 L389.5,934.78 L392.5,934.59 L395.5,934.39 L398.5,934.20 L401.5,934.00 L404.5,933.81 L407.5,933.62 L410.5,933.43 L413.5,933.24 L416.5,933.05 L419.5,932.87 L422.5,932.68 L425.5,932.50 L428.5,932.31 L431.5,932.13 L434.5,931.95 L437.5,931.77 L440.5,931.59 L443.5,931.41 L446.5,931.23 L449.5,931.05 L452.5,930.88 L455.5,930.70 L458.5,930.53 L461.5,930.36 L464.5,930.19 L467.5,930.02 L470.5,929.85 L473.5,929.68 L476.5,929.51 L479.5,929.35 L482.5,929.18 L485.5,929.02 L488.5,928.86 L491.5,928.70 L494.5,928.54 L497.5,928.38 L500.5,928.22 L503.5,928.06 L506.5,927.91 L509.5,927.75 L512.5,927.60 L515.5,927.45 L518.5,927.30 L521.5,927.15 L524.5,927.00 L527.5,926.85 L530.5,926.70 L533.5,926.56 L536.5,926.41 L539.5,926.27 L542.5,926.13 L545.5,925.99 L548.5,925.85 L551.5,925.71 L554.5,925.57 L557.5,925.43 L560.5,925.30 L563.5,925.16 L566.5,925.03 L569.5,924.90 L572.5,924.77 L575.5,924.64 L578.5,924.51 L581.5,924.38 L584.5,924.25 L587.5,924.13 L590.5,924.01 L593.5,923.88 L596.5,923.76 L599.5,923.64 L602.5,923.52 L605.5,923.40 L608.5,923.29 L611.5,923.17 L614.5,923.06 L617.5,922.94 L620.5,922.83 L623.5,922.72 L626.5,922.61 L629.5,922.50 L632.5,922.39 L635.5,922.29 L638.5,922.18 L641.5,922.08 L644.5,921.97 L647.5,921.87 L650.5,921.77 L653.5,921.67 L656.5,921.57 L659.5,921.48 L662.5,921.38 L665.5,921.29 L668.5,921.19 L671.5,921.10 L674.5,921.01 L677.5,920.92 L680.5,920.83 L683.5,920.74 L686.5,920.66 L689.5,920.57 L692.5,920.49 L695.5,920.41 L698.5,920.33 L701.5,920.25 L704.5,920.17 L707.5,920.09 L710.5,920.01 L713.5,919.94 L716.5,919.86 L719.5,919.79 L722.5,919.72 L725.5,919.65 L728.5,919.58 L731.5,919.51 L734.5,919.45 L737.5,919.38 L740.5,919.32 L743.5,919.26 L746.5,919.19 L749.5,919.13 L752.5,919.07 L755.5,919.02 L758.5,918.96 L761.5,918.91 L764.5,918.85 L767.5,918.80 L770.5,918.75 L773.5,918.70 L776.5,918.65 L779.5,918.60 L782.5,918.55 L785.5,918.51 L788.5,918.46 L791.5,918.42 L794.5,918.38 L797.5,918.34 L800.5,918.30 L803.5,918.26 L806.5,918.23 L809.5,918.19 L812.5,918.16 L815.5,918.13 L818.5,918.10 L821.5,918.07 L824.5,918.04 L827.5,918.01 L830.5,917.98 L833.5,917.96 L836.5,917.94 L839.5,917.91 L842.5,917.89 L845.5,917.87 L848.5,917.86 L851.5,917.84 L854.5,917.82 L857.5,917.81 L860.5,917.80 L863.5,917.78 L866.5,917.77 L869.5,917.77 L872.5,917.76 L875.5,917.75 L878.5,917.75 L881.5,917.74 L884.5,917.74 L887.5,917.74 L890.5,917.74 L893.5,917.74 L896.5,917.74 L899.5,917.75 L902.5,917.75 L905.5,917.76 L908.5,917.77 L911.5,917.78 L914.5,917.79 L917.5,917.80 L920.5,917.82 L923.5,917.83 L926.5,917.85 L929.5,917.86 L932.5,917.88 L935.5,917.90 L938.5,917.93 L941.5,917.95 L944.5,917.97 L947.5,918.00 L950.5,918.03 L953.5,918.05 L956.5,918.08 L959.5,918.12 L962.5,918.15 L965.5,918.18 L968.5,918.22 L971.5,918.25 L974.5,918.29 L977.5,918.33 L980.5,918.37 L983.5,918.42 L986.5,918.46 L989.5,918.50 L992.5,918.55 L995.5,918.60 L998.5,918.65 L1001.5,918.70 L1004.5,918.75 L1007.5,918.80 L1010.5,918.86 L1013.5,918.91 L1016.5,918.97 L1019.5,919.03 L1022.5,919.09 L1025.5,919.15 L1028.5,919.22 L1031.5,919.28 L1034.5,919.35 L1037.5,919.41 L1040.5,919.48 L1043.5,919.55 L1046.5,919.63 L1049.5,919.70 L1052.5,919.77 L1055.5,919.85 L1058.5,919.93 L1061.5,920.01 L1064.5,920.09 L1067.5,920.17 L1070.5,920.25 L1073.5,920.33 L1076.5,920.42 L1079.5,920.51 L1082.5,920.60 L1085.5,920.69 L1088.5,920.78 L1091.5,920.87 L1094.5,920.97 L1097.5,921.06 L1100.5,921.16 L1103.5,921.26 L1106.5,921.36 L1109.5,921.46 L1112.5,921.56 L1115.5,921.67 L1118.5,921.77 L1121.5,921.88 L1124.5,921.99 L1127.5,922.10 L1130.5,922.21 L1133.5,922.33 L1136.5,922.44 L1139.5,922.56 L1142.5,922.68 L1145.5,922.80 L1148.5,922.92 L1151.5,923.04 L1154.5,923.16 L1157.5,923.29 L1160.5,923.42 L1163.5,923.54 L1166.5,923.67 L1169.5,923.80 L1172.5,923.94 L1175.5,924.07 L1178.5,924.21 L1181.5,924.34 L1184.5,924.48 L1187.5,924.62 L1190.5,924.77 L1193.5,924.91 L1196.5,925.05 L1199.5,925.20 L1202.5,925.35 L1205.5,925.50 L1208.5,925.65 L1211.5,925.80 L1214.5,925.95 L1217.5,926.11 L1220.5,926.26 L1223.5,926.42 L1226.5,926.58 L1229.5,926.74 L1232.5,926.91 L1235.5,927.07 L1238.5,927.24 L1241.5,927.40 L1244.5,927.57 L1247.5,927.74 L1250.5,927.92 L1253.5,928.09 L1256.5,928.26 L1259.5,928.44 L1262.5,928.62 L1265.5,928.80 L1268.5,928.98 L1271.5,929.16 L1274.5,929.35 L1277.5,929.53 L1280.5,929.72 L1283.5,929.91 L1286.5,930.10 L1289.5,930.29 L1292.5,930.49 L1295.5,930.68 L1298.5,930.88 L1301.5,931.08 L1304.5,931.28 L1307.5,931.48 L1310.5,931.68 L1313.5,931.89 L1316.5,932.09 L1319.5,932.30 L1322.5,932.51 L1325.5,932.72 L1328.5,932.93 L1331.5,933.15 L1334.5,933.36 L1337.5,933.58 L1340.5,933.80 L1343.5,934.02 L1346.5,934.24 L1349.5,934.46 L1352.5,934.69 L1355.5,934.92 L1358.5,935.14 L1361.5,935.37 L1364.5,935.61 L1367.5,935.84 L1370.5,936.07 L1373.5,936.31 L1376.5,936.55 L1379.5,936.79 L1382.5,937.03 L1385.5,937.27 L1388.5,937.52 L1391.5,937.76 L1394.5,938.01 L1397.5,938.26 L1400.5,938.51 L1403.5,938.76 L1406.5,939.02 L1409.5,939.27 L1412.5,939.53 L1415.5,939.79 L1418.5,940.05 L1421.5,940.31 L1424.5,940.58 L1427.5,940.84 L1430.5,941.11 L1433.5,941.38 L1436.5,941.65 L1439.5,941.92 L1442.5,942.19 L1445.5,942.47 L1448.5,942.75 L1451.5,943.02 L1454.5,943.30 L1457.5,943.59 L1460.5,943.87 L1463.5,944.15 L1466.5,944.44 L1469.5,944.73 L1472.5,945.02 L1475.5,945.31 L1478.5,945.61 L1481.5,945.90 L1484.5,946.20 L1487.5,946.50 L1490.5,946.80 L1493.5,947.10 L1496.5,947.40 L1499.5,947.71 L1502.5,948.01 L1505.5,948.32 L1508.5,948.63 L1511.5,948.95 L1514.5,949.26 L1517.5,949.57 L1520.5,949.89 L1523.5,950.21 L1526.5,950.53 L1529.5,950.85 L1532.5,951.18 L1535.5,951.50 L1538.5,951.83 L1541.5,952.16 L1544.5,952.49 L1547.5,952.82 L1550.5,953.15 L1553.5,953.49 L1556.5,953.83 L1559.5,954.17 L1562.5,954.51 L1565.5,954.85 L1568.5,955.19 L1571.5,955.54 L1574.5,955.89 L1577.5,956.24 L1580.5,956.59 L1583.5,956.94 L1586.5,957.30 L1589.5,957.65 L1592.5,958.01 L1595.5,958.37 L1598.5,958.73 L1601.5,959.10 L1604.5,959.46 L1607.5,959.83 L1610.5,960.20 L1613.5,960.57 L1616.5,960.94 L1619.5,961.31 L1622.5,961.69 L1625.5,962.06 L1628.5,962.44 L1631.5,962.82 L1634.5,963.21 L1637.5,963.59 L1640.5,963.98 L1643.5,964.36 L1644.3,964.80" fill="none" stroke="#1a1a1a" stroke-width="1.1"/>
<line x1="634.3" y1="918.3" x2="1148.6" y2="918.1" stroke="#1030d0" stroke-width="1.1" />
<line x1="89.5" y1="960" x2="89.5" y2="970" stroke="#000" stroke-width="1" />
<line x1="1644.3" y1="965" x2="1644.3" y2="970" stroke="#000" stroke-width="1" />
<line x1="116.5" y1="958" x2="116.5" y2="970" stroke="#ff2020" stroke-width="1.2" />
<circle cx="89.5" cy="959.8" r="2.6" fill="#fff" stroke="#222" stroke-width="1"/>
<circle cx="324.3" cy="938.1" r="2.6" fill="#fff" stroke="#222" stroke-width="1"/>
<circle cx="1405.7" cy="938.6" r="2.6" fill="#fff" stroke="#222" stroke-width="1"/>
<circle cx="1644.3" cy="964.8" r="2.6" fill="#fff" stroke="#222" stroke-width="1"/>
<circle cx="634.3" cy="918.3" r="3" fill="#fff" stroke="#30e030" stroke-width="1.2"/>
<circle cx="1148.6" cy="918.1" r="3" fill="#fff" stroke="#3040ff" stroke-width="1.2"/>
<circle cx="851" cy="918.3" r="4.5" fill="#ff0000" stroke="#1a1a90" stroke-width="1"/>
<line x1="18" y1="989" x2="18" y2="962" stroke="#1010ff" stroke-width="1.2" />
<line x1="18" y1="989" x2="49" y2="989" stroke="#ff2020" stroke-width="1.2" />
<path d="M13,967 L18,962 L23,967" fill="none" stroke="#1010ff" stroke-width="1"/>
<path d="M44,984 L49,989 L44,994" fill="none" stroke="#ff2020" stroke-width="1"/>
<text x="14.5" y="959" font-size="10" fill="#1010ff" text-anchor="start" font-weight="normal" >Z</text>
<text x="52" y="993" font-size="10" fill="#ff2020" text-anchor="start" font-weight="normal" >X</text>
<rect x="1716.5" y="78" width="200.5" height="368" fill="#f3f6fa" stroke="#8a8a8a" stroke-width="1.4" rx="4" />
<path d="M1718,82 Q1718,78.5 1722,78.5 L1912,78.5 Q1916,78.5 1916,82 L1916,107.5 L1718,107.5 Z" fill="#f0f0f0"/>
<text x="1725.5" y="97" font-size="12.3" fill="#8c8c8c" text-anchor="start" font-weight="normal"  textLength="66.4" lengthAdjust="spacingAndGlyphs">Master Scale</text>
<rect x="1897" y="86" width="19" height="18.5" fill="#dedede" />
<text x="1906.5" y="99" font-size="11" fill="#f4f4f4" text-anchor="middle" font-weight="normal" >×</text>
<rect x="1716.5" y="447" width="200.5" height="194.5" fill="#f3f6fa" stroke="#8a8a8a" stroke-width="1.4" rx="4" />
<path d="M1718,451 Q1718,447.5 1722,447.5 L1912,447.5 Q1916,447.5 1916,451 L1916,476.3 L1718,476.3 Z" fill="#f0f0f0"/>
<text x="1725.5" y="466.6" font-size="12.3" fill="#8c8c8c" text-anchor="start" font-weight="normal"  textLength="144" lengthAdjust="spacingAndGlyphs">Control point (Stringer Top)</text>
<rect x="1897" y="455" width="19" height="18.5" fill="#dedede" />
<text x="1906.5" y="468.6" font-size="11" fill="#f4f4f4" text-anchor="middle" font-weight="normal"  stroke="#f4f4f4" stroke-width="0.2">×</text>
<rect x="1716.5" y="644" width="200.5" height="249.5" fill="#f3f6fa" stroke="#8a8a8a" stroke-width="1.4" rx="4" />
<path d="M1718,648 Q1718,644.5 1722,644.5 L1912,644.5 Q1916,644.5 1916,648 L1916,672 L1718,672 Z" fill="#f0f0f0"/>
<text x="1725.5" y="663.6" font-size="12.3" fill="#8c8c8c" text-anchor="start" font-weight="normal"  textLength="85" lengthAdjust="spacingAndGlyphs">Guidelines zorra</text>
<rect x="1897" y="652" width="19" height="18.5" fill="#dedede" />
<text x="1906.5" y="665.6" font-size="11" fill="#f4f4f4" text-anchor="middle" font-weight="normal"  stroke="#f4f4f4" stroke-width="0.2">×</text>
<rect x="1717" y="894" width="204" height="10" fill="url(#shadow)" />
<line x1="1917.5" y1="78" x2="1917.5" y2="1010" stroke="#8a8a8a" stroke-width="1" />
<rect x="1918" y="78" width="3" height="932" fill="#f3f6fa" />
<line x1="1920.5" y1="44" x2="1920.5" y2="1010" stroke="#b0b0b0" stroke-width="1" />
<text x="1803.7" y="124.6" font-size="11.3" fill="#0a0a50" text-anchor="start" font-weight="normal"  stroke="#0a0a50" stroke-width="0.2" textLength="24.6" lengthAdjust="spacingAndGlyphs">zorra</text>
<rect x="1722" y="131" width="71" height="17" fill="#f3f6fa" />
<line x1="1722" y1="131.5" x2="1793" y2="131.5" stroke="#a8a8a8" stroke-width="1" />
<line x1="1722.5" y1="131" x2="1722.5" y2="148" stroke="#a8a8a8" stroke-width="1" />
<line x1="1722" y1="147.5" x2="1793" y2="147.5" stroke="#ffffff" stroke-width="1" />
<line x1="1792.5" y1="131" x2="1792.5" y2="148" stroke="#ffffff" stroke-width="1" />
<text x="1728.2" y="143.4" font-size="12.3" fill="#000" text-anchor="start" font-weight="bold"  textLength="59.2" lengthAdjust="spacingAndGlyphs">5'6 19/32"</text>
<rect x="1794" y="131" width="59" height="17" fill="#f3f6fa" />
<line x1="1794" y1="131.5" x2="1853" y2="131.5" stroke="#a8a8a8" stroke-width="1" />
<line x1="1794.5" y1="131" x2="1794.5" y2="148" stroke="#a8a8a8" stroke-width="1" />
<line x1="1794" y1="147.5" x2="1853" y2="147.5" stroke="#ffffff" stroke-width="1" />
<line x1="1852.5" y1="131" x2="1852.5" y2="148" stroke="#ffffff" stroke-width="1" />
<text x="1802.5" y="143.4" font-size="12.3" fill="#000" text-anchor="start" font-weight="bold"  textLength="41.5" lengthAdjust="spacingAndGlyphs">18 1/2"</text>
<rect x="1854" y="131" width="59" height="17" fill="#f3f6fa" />
<line x1="1854" y1="131.5" x2="1913" y2="131.5" stroke="#a8a8a8" stroke-width="1" />
<line x1="1854.5" y1="131" x2="1854.5" y2="148" stroke="#a8a8a8" stroke-width="1" />
<line x1="1854" y1="147.5" x2="1913" y2="147.5" stroke="#ffffff" stroke-width="1" />
<line x1="1912.5" y1="131" x2="1912.5" y2="148" stroke="#ffffff" stroke-width="1" />
<text x="1866" y="143.4" font-size="12.3" fill="#000" text-anchor="start" font-weight="bold"  textLength="35.2" lengthAdjust="spacingAndGlyphs">2 1/4"</text>
<text x="1735.8" y="161.0" font-size="11.3" fill="#0a0a50" text-anchor="start" font-weight="normal"  stroke="#0a0a50" stroke-width="0.2" textLength="37.7" lengthAdjust="spacingAndGlyphs">Zero Pt.</text>
<text x="1792.4" y="161.0" font-size="11.3" fill="#0a0a50" text-anchor="start" font-weight="normal"  stroke="#0a0a50" stroke-width="0.2" textLength="45.9" lengthAdjust="spacingAndGlyphs">Max Wdt.</text>
<text x="1864.1" y="161.0" font-size="11.3" fill="#0a0a50" text-anchor="start" font-weight="normal"  stroke="#0a0a50" stroke-width="0.2" textLength="48.5" lengthAdjust="spacingAndGlyphs">Max Thck.</text>
<rect x="1722" y="165" width="62" height="17" fill="#f3f6fa" />
<line x1="1722" y1="165.5" x2="1784" y2="165.5" stroke="#a8a8a8" stroke-width="1" />
<line x1="1722.5" y1="165" x2="1722.5" y2="182" stroke="#a8a8a8" stroke-width="1" />
<line x1="1722" y1="181.5" x2="1784" y2="181.5" stroke="#ffffff" stroke-width="1" />
<line x1="1783.5" y1="165" x2="1783.5" y2="182" stroke="#ffffff" stroke-width="1" />
<text x="1729.5" y="176.9" font-size="11.3" fill="#0a0a50" text-anchor="start" font-weight="normal"  stroke="#0a0a50" stroke-width="0.2" textLength="47.8" lengthAdjust="spacingAndGlyphs">@32.827"</text>
<rect x="1786" y="165" width="62" height="17" fill="#f3f6fa" />
<line x1="1786" y1="165.5" x2="1848" y2="165.5" stroke="#a8a8a8" stroke-width="1" />
<line x1="1786.5" y1="165" x2="1786.5" y2="182" stroke="#a8a8a8" stroke-width="1" />
<line x1="1786" y1="181.5" x2="1848" y2="181.5" stroke="#ffffff" stroke-width="1" />
<line x1="1847.5" y1="165" x2="1847.5" y2="182" stroke="#ffffff" stroke-width="1" />
<text x="1793.6" y="176.9" font-size="11.3" fill="#0a0a50" text-anchor="start" font-weight="normal"  stroke="#0a0a50" stroke-width="0.2" textLength="47.2" lengthAdjust="spacingAndGlyphs">@31.834"</text>
<rect x="1851" y="165" width="62" height="17" fill="#f3f6fa" />
<line x1="1851" y1="165.5" x2="1913" y2="165.5" stroke="#a8a8a8" stroke-width="1" />
<line x1="1851.5" y1="165" x2="1851.5" y2="182" stroke="#a8a8a8" stroke-width="1" />
<line x1="1851" y1="181.5" x2="1913" y2="181.5" stroke="#ffffff" stroke-width="1" />
<line x1="1912.5" y1="165" x2="1912.5" y2="182" stroke="#ffffff" stroke-width="1" />
<text x="1858.5" y="176.9" font-size="11.3" fill="#0a0a50" text-anchor="start" font-weight="normal"  stroke="#0a0a50" stroke-width="0.2" textLength="47.8" lengthAdjust="spacingAndGlyphs">@33.555"</text>
<text x="1728.6" y="201.9" font-size="11.3" fill="#000" text-anchor="start" font-weight="normal"  stroke="#000" stroke-width="0.2" textLength="33.6" lengthAdjust="spacingAndGlyphs">Volume</text>
<text x="1778.5" y="201.9" font-size="12.3" fill="#000" text-anchor="start" font-weight="bold"  textLength="53.5" lengthAdjust="spacingAndGlyphs">24.0306 L</text>
<rect x="1845.5" y="188.5" width="20" height="19" fill="#eef1f9" stroke="#a8b8f4" stroke-width="1" rx="2" />
<text x="1855.5" y="202.6" font-size="11" fill="#0a0a50" text-anchor="middle" font-weight="normal"  stroke="#0a0a50" stroke-width="0.2">*</text>
<rect x="1865.5" y="188.5" width="42" height="19" fill="#eef1f9" stroke="#a8b8f4" stroke-width="1" rx="2" />
<text x="1869.1" y="201.3" font-size="11.3" fill="#0a0a50" text-anchor="start" font-weight="normal"  stroke="#0a0a50" stroke-width="0.2" textLength="30.9" lengthAdjust="spacingAndGlyphs">Resize</text>
<path d="M1727.7,218.5 L1722.5,218.5 L1722.5,344.5 L1911.5,344.5 L1911.5,218.5 L1759.2,218.5" fill="none" stroke="#a8a8a8" stroke-width="1"/>
<text x="1730.7" y="223.1" font-size="11.3" fill="#0a0a50" text-anchor="start" font-weight="normal"  stroke="#0a0a50" stroke-width="0.2" textLength="25.5" lengthAdjust="spacingAndGlyphs">Table</text>
<rect x="1845.5" y="209.5" width="62" height="16" fill="#eef1f9" stroke="#a8b8f4" stroke-width="1" rx="2" />
<text x="1853.4" y="221.4" font-size="11.3" fill="#0a0a50" text-anchor="start" font-weight="normal"  stroke="#0a0a50" stroke-width="0.2" textLength="42.8" lengthAdjust="spacingAndGlyphs">More &gt;&gt;</text>
<text x="1726" y="241.5" font-size="11.3" fill="#0a0a50" text-anchor="start" font-weight="normal"  stroke="#0a0a50" stroke-width="0.2" textLength="17.5" lengthAdjust="spacingAndGlyphs">/tail</text>
<rect x="1747.5" y="228.5" width="52" height="17" fill="#eef1f9" stroke="#a8b8f4" stroke-width="1" rx="2" />
<text x="1757.8" y="240.6" font-size="11.3" fill="#0a0a50" text-anchor="start" font-weight="normal"  stroke="#0a0a50" stroke-width="0.2" textLength="27.5" lengthAdjust="spacingAndGlyphs">Width</text>
<rect x="1801.5" y="228.5" width="52" height="17" fill="#eef1f9" stroke="#a8b8f4" stroke-width="1" rx="2" />
<text x="1806.2" y="240.6" font-size="11.3" fill="#0a0a50" text-anchor="start" font-weight="normal"  stroke="#0a0a50" stroke-width="0.2" textLength="38.7" lengthAdjust="spacingAndGlyphs">Thic. Str</text>
<rect x="1855.5" y="228.5" width="52" height="17" fill="#eef1f9" stroke="#a8b8f4" stroke-width="1" rx="2" />
<text x="1857.3" y="240.6" font-size="11.3" fill="#0a0a50" text-anchor="start" font-weight="normal"  stroke="#0a0a50" stroke-width="0.2" textLength="43.6" lengthAdjust="spacingAndGlyphs">Rock. Str</text>
<text x="1729.5" y="258.9" font-size="11.3" fill="#0a0a50" text-anchor="start" font-weight="normal"  stroke="#0a0a50" stroke-width="0.2" textLength="10.5" lengthAdjust="spacingAndGlyphs">0"</text>
<rect x="1747.5" y="246.5" width="52.0" height="16.5" fill="#f3f6fa" />
<line x1="1747.5" y1="247.0" x2="1799.5" y2="247.0" stroke="#a8a8a8" stroke-width="1" />
<line x1="1748.0" y1="246.5" x2="1748.0" y2="263.0" stroke="#a8a8a8" stroke-width="1" />
<line x1="1747.5" y1="262.5" x2="1799.5" y2="262.5" stroke="#ffffff" stroke-width="1" />
<line x1="1799.0" y1="246.5" x2="1799.0" y2="263.0" stroke="#ffffff" stroke-width="1" />
<text x="1756.2" y="258.9" font-size="11.3" fill="#0a0a50" text-anchor="start" font-weight="normal"  stroke="#0a0a50" stroke-width="0.2" textLength="34.9" lengthAdjust="spacingAndGlyphs">1 1/16"</text>
<rect x="1801" y="246.5" width="52.5" height="16.5" fill="#f3f6fa" />
<line x1="1801" y1="247.0" x2="1853.5" y2="247.0" stroke="#a8a8a8" stroke-width="1" />
<line x1="1801.5" y1="246.5" x2="1801.5" y2="263.0" stroke="#a8a8a8" stroke-width="1" />
<line x1="1801" y1="262.5" x2="1853.5" y2="262.5" stroke="#ffffff" stroke-width="1" />
<line x1="1853.0" y1="246.5" x2="1853.0" y2="263.0" stroke="#ffffff" stroke-width="1" />
<text x="1814.3" y="258.9" font-size="11.3" fill="#0a0a50" text-anchor="start" font-weight="normal"  stroke="#0a0a50" stroke-width="0.2" textLength="25.6" lengthAdjust="spacingAndGlyphs">7/16"</text>
<rect x="1855" y="246.5" width="52.5" height="16.5" fill="#f3f6fa" />
<line x1="1855" y1="247.0" x2="1907.5" y2="247.0" stroke="#a8a8a8" stroke-width="1" />
<line x1="1855.5" y1="246.5" x2="1855.5" y2="263.0" stroke="#a8a8a8" stroke-width="1" />
<line x1="1855" y1="262.5" x2="1907.5" y2="262.5" stroke="#ffffff" stroke-width="1" />
<line x1="1907.0" y1="246.5" x2="1907.0" y2="263.0" stroke="#ffffff" stroke-width="1" />
<text x="1863.7" y="258.9" font-size="11.3" fill="#0a0a50" text-anchor="start" font-weight="normal"  stroke="#0a0a50" stroke-width="0.2" textLength="35.5" lengthAdjust="spacingAndGlyphs">2 1/16"</text>
<text x="1727.5" y="277.0" font-size="11.3" fill="#0a0a50" text-anchor="start" font-weight="normal"  stroke="#0a0a50" stroke-width="0.2" textLength="15.4" lengthAdjust="spacingAndGlyphs">12"</text>
<rect x="1747.5" y="264.5" width="52.0" height="16.5" fill="#f3f6fa" />
<line x1="1747.5" y1="265.0" x2="1799.5" y2="265.0" stroke="#a8a8a8" stroke-width="1" />
<line x1="1748.0" y1="264.5" x2="1748.0" y2="281.0" stroke="#a8a8a8" stroke-width="1" />
<line x1="1747.5" y1="280.5" x2="1799.5" y2="280.5" stroke="#ffffff" stroke-width="1" />
<line x1="1799.0" y1="264.5" x2="1799.0" y2="281.0" stroke="#ffffff" stroke-width="1" />
<text x="1750.4" y="277.0" font-size="11.3" fill="#0a0a50" text-anchor="start" font-weight="normal"  stroke="#0a0a50" stroke-width="0.2" textLength="46.5" lengthAdjust="spacingAndGlyphs">14 41/64"</text>
<rect x="1801" y="264.5" width="52.5" height="16.5" fill="#f3f6fa" />
<line x1="1801" y1="265.0" x2="1853.5" y2="265.0" stroke="#a8a8a8" stroke-width="1" />
<line x1="1801.5" y1="264.5" x2="1801.5" y2="281.0" stroke="#a8a8a8" stroke-width="1" />
<line x1="1801" y1="280.5" x2="1853.5" y2="280.5" stroke="#ffffff" stroke-width="1" />
<line x1="1853.0" y1="264.5" x2="1853.0" y2="281.0" stroke="#ffffff" stroke-width="1" />
<text x="1813.5" y="277.0" font-size="11.3" fill="#0a0a50" text-anchor="start" font-weight="normal"  stroke="#0a0a50" stroke-width="0.2" textLength="28.4" lengthAdjust="spacingAndGlyphs">1 1/2"</text>
<rect x="1855" y="264.5" width="52.5" height="16.5" fill="#f3f6fa" />
<line x1="1855" y1="265.0" x2="1907.5" y2="265.0" stroke="#a8a8a8" stroke-width="1" />
<line x1="1855.5" y1="264.5" x2="1855.5" y2="281.0" stroke="#a8a8a8" stroke-width="1" />
<line x1="1855" y1="280.5" x2="1907.5" y2="280.5" stroke="#ffffff" stroke-width="1" />
<line x1="1907.0" y1="264.5" x2="1907.0" y2="281.0" stroke="#ffffff" stroke-width="1" />
<text x="1865.5" y="277.0" font-size="11.3" fill="#0a0a50" text-anchor="start" font-weight="normal"  stroke="#0a0a50" stroke-width="0.2" textLength="31.3" lengthAdjust="spacingAndGlyphs">21/32"</text>
<text x="1727.5" y="313.0" font-size="11.3" fill="#0a0a50" text-anchor="start" font-weight="normal"  stroke="#0a0a50" stroke-width="0.2" textLength="15.4" lengthAdjust="spacingAndGlyphs">12"</text>
<rect x="1747.5" y="300.5" width="52.0" height="16.5" fill="#f3f6fa" />
<line x1="1747.5" y1="301.0" x2="1799.5" y2="301.0" stroke="#a8a8a8" stroke-width="1" />
<line x1="1748.0" y1="300.5" x2="1748.0" y2="317.0" stroke="#a8a8a8" stroke-width="1" />
<line x1="1747.5" y1="316.5" x2="1799.5" y2="316.5" stroke="#ffffff" stroke-width="1" />
<line x1="1799.0" y1="300.5" x2="1799.0" y2="317.0" stroke="#ffffff" stroke-width="1" />
<text x="1756.2" y="313.0" font-size="11.3" fill="#0a0a50" text-anchor="start" font-weight="normal"  stroke="#0a0a50" stroke-width="0.2" textLength="34.9" lengthAdjust="spacingAndGlyphs">12 5/8"</text>
<rect x="1801" y="300.5" width="52.5" height="16.5" fill="#f3f6fa" />
<line x1="1801" y1="301.0" x2="1853.5" y2="301.0" stroke="#a8a8a8" stroke-width="1" />
<line x1="1801.5" y1="300.5" x2="1801.5" y2="317.0" stroke="#a8a8a8" stroke-width="1" />
<line x1="1801" y1="316.5" x2="1853.5" y2="316.5" stroke="#ffffff" stroke-width="1" />
<line x1="1853.0" y1="300.5" x2="1853.0" y2="317.0" stroke="#ffffff" stroke-width="1" />
<text x="1808" y="313.0" font-size="11.3" fill="#0a0a50" text-anchor="start" font-weight="normal"  stroke="#0a0a50" stroke-width="0.2" textLength="40" lengthAdjust="spacingAndGlyphs">1 35/64"</text>
<rect x="1855" y="300.5" width="52.5" height="16.5" fill="#f3f6fa" />
<line x1="1855" y1="301.0" x2="1907.5" y2="301.0" stroke="#a8a8a8" stroke-width="1" />
<line x1="1855.5" y1="300.5" x2="1855.5" y2="317.0" stroke="#a8a8a8" stroke-width="1" />
<line x1="1855" y1="316.5" x2="1907.5" y2="316.5" stroke="#ffffff" stroke-width="1" />
<line x1="1907.0" y1="300.5" x2="1907.0" y2="317.0" stroke="#ffffff" stroke-width="1" />
<text x="1864.9" y="313.0" font-size="11.3" fill="#0a0a50" text-anchor="start" font-weight="normal"  stroke="#0a0a50" stroke-width="0.2" textLength="34.3" lengthAdjust="spacingAndGlyphs">1 7/32"</text>
<text x="1729.5" y="330.4" font-size="11.3" fill="#0a0a50" text-anchor="start" font-weight="normal"  stroke="#0a0a50" stroke-width="0.2" textLength="10.5" lengthAdjust="spacingAndGlyphs">0"</text>
<rect x="1747.5" y="318.5" width="52.0" height="16.5" fill="#f3f6fa" />
<line x1="1747.5" y1="319.0" x2="1799.5" y2="319.0" stroke="#a8a8a8" stroke-width="1" />
<line x1="1748.0" y1="318.5" x2="1748.0" y2="335.0" stroke="#a8a8a8" stroke-width="1" />
<line x1="1747.5" y1="334.5" x2="1799.5" y2="334.5" stroke="#ffffff" stroke-width="1" />
<line x1="1799.0" y1="318.5" x2="1799.0" y2="335.0" stroke="#ffffff" stroke-width="1" />
<text x="1757.4" y="330.4" font-size="11.3" fill="#0a0a50" text-anchor="start" font-weight="normal"  stroke="#0a0a50" stroke-width="0.2" textLength="32" lengthAdjust="spacingAndGlyphs">23/64"</text>
<rect x="1801" y="318.5" width="52.5" height="16.5" fill="#f3f6fa" />
<line x1="1801" y1="319.0" x2="1853.5" y2="319.0" stroke="#a8a8a8" stroke-width="1" />
<line x1="1801.5" y1="318.5" x2="1801.5" y2="335.0" stroke="#a8a8a8" stroke-width="1" />
<line x1="1801" y1="334.5" x2="1853.5" y2="334.5" stroke="#ffffff" stroke-width="1" />
<line x1="1853.0" y1="318.5" x2="1853.0" y2="335.0" stroke="#ffffff" stroke-width="1" />
<text x="1811.4" y="330.4" font-size="11.3" fill="#0a0a50" text-anchor="start" font-weight="normal"  stroke="#0a0a50" stroke-width="0.2" textLength="31.4" lengthAdjust="spacingAndGlyphs">15/64"</text>
<rect x="1855" y="318.5" width="52.5" height="16.5" fill="#f3f6fa" />
<line x1="1855" y1="319.0" x2="1907.5" y2="319.0" stroke="#a8a8a8" stroke-width="1" />
<line x1="1855.5" y1="318.5" x2="1855.5" y2="335.0" stroke="#a8a8a8" stroke-width="1" />
<line x1="1855" y1="334.5" x2="1907.5" y2="334.5" stroke="#ffffff" stroke-width="1" />
<line x1="1907.0" y1="318.5" x2="1907.0" y2="335.0" stroke="#ffffff" stroke-width="1" />
<text x="1866.6" y="330.4" font-size="11.3" fill="#0a0a50" text-anchor="start" font-weight="normal"  stroke="#0a0a50" stroke-width="0.2" textLength="29.6" lengthAdjust="spacingAndGlyphs">4 1/2"</text>
<text x="1725.2" y="295.0" font-size="11.3" fill="#0a0a50" text-anchor="start" font-weight="normal"  stroke="#0a0a50" stroke-width="0.2" textLength="25.8" lengthAdjust="spacingAndGlyphs">/nose</text>
<path d="M1727.1,352.5 L1722.5,352.5 L1722.5,390.5 L1911.5,390.5 L1911.5,352.5 L1832.1,352.5" fill="none" stroke="#a8a8a8" stroke-width="1"/>
<text x="1730.1" y="357.1" font-size="11.3" fill="#0a0a50" text-anchor="start" font-weight="normal"  stroke="#0a0a50" stroke-width="0.2" textLength="99" lengthAdjust="spacingAndGlyphs">Measurements along</text>
<rect x="1845.5" y="340.0" width="62" height="16.5" fill="#eef1f9" stroke="#a8b8f4" stroke-width="1" rx="2" />
<text x="1855.6" y="351.5" font-size="11.3" fill="#0a0a50" text-anchor="start" font-weight="normal"  stroke="#0a0a50" stroke-width="0.2" textLength="38.9" lengthAdjust="spacingAndGlyphs">&lt;&lt; Btns</text>
<rect x="1728.5" y="362.5" width="83" height="22" fill="#ffffff" stroke="#2a4ae8" stroke-width="1.6" rx="2" />
<text x="1735.7" y="377.6" font-size="11.3" fill="#0a0a50" text-anchor="start" font-weight="normal"  stroke="#0a0a50" stroke-width="0.2" textLength="65.5" lengthAdjust="spacingAndGlyphs">A straight line</text>
<rect x="1822.5" y="362.5" width="83" height="22" fill="#eef1f9" stroke="#a8b8f4" stroke-width="1" rx="2" />
<text x="1832.6" y="377.6" font-size="11.3" fill="#0a0a50" text-anchor="start" font-weight="normal"  stroke="#0a0a50" stroke-width="0.2" textLength="58.4" lengthAdjust="spacingAndGlyphs">The Stringer</text>
<path d="M1727.1,398.5 L1722.5,398.5 L1722.5,436.5 L1911.5,436.5 L1911.5,398.5 L1778.1,398.5" fill="none" stroke="#a8a8a8" stroke-width="1"/>
<text x="1730.1" y="403.1" font-size="11.3" fill="#0a0a50" text-anchor="start" font-weight="normal"  stroke="#0a0a50" stroke-width="0.2" textLength="45" lengthAdjust="spacingAndGlyphs">Structure</text>
<rect x="1728.5" y="408.5" width="83" height="22" fill="#eef1f9" stroke="#a8b8f4" stroke-width="1" rx="2" />
<text x="1745.4" y="423.6" font-size="11.3" fill="#0a0a50" text-anchor="start" font-weight="normal"  stroke="#0a0a50" stroke-width="0.2" textLength="44.9" lengthAdjust="spacingAndGlyphs">New Slice</text>
<rect x="1822.5" y="408.5" width="83" height="22" fill="#eef1f9" stroke="#a8b8f4" stroke-width="1" rx="2" />
<text x="1828.3" y="423.6" font-size="11.3" fill="#0a0a50" text-anchor="start" font-weight="normal"  stroke="#0a0a50" stroke-width="0.2" textLength="66.8" lengthAdjust="spacingAndGlyphs">New 3D Layer</text>
<text x="1740" y="493.6" font-size="11.3" fill="#0a0a50" text-anchor="start" font-weight="normal"  stroke="#0a0a50" stroke-width="0.2" textLength="48.8" lengthAdjust="spacingAndGlyphs">Tangent 1</text>
<text x="1805.7" y="493.6" font-size="11.3" fill="#0a0a50" text-anchor="start" font-weight="normal"  stroke="#0a0a50" stroke-width="0.2" textLength="24" lengthAdjust="spacingAndGlyphs">Point</text>
<text x="1851.2" y="493.6" font-size="11.3" fill="#0a0a50" text-anchor="start" font-weight="normal"  stroke="#0a0a50" stroke-width="0.2" textLength="48.5" lengthAdjust="spacingAndGlyphs">Tangent 2</text>
<rect x="1726.0" y="497.5" width="18.0" height="19" fill="#eef1f9" stroke="#a8b8f4" stroke-width="1" rx="2" />
<text x="1735.0" y="511.6" font-size="11.3" fill="#0a0a50" text-anchor="middle" font-weight="normal"  stroke="#0a0a50" stroke-width="0.2">--</text>
<rect x="1744.5" y="497.5" width="18.5" height="19" fill="#eef1f9" stroke="#a8b8f4" stroke-width="1" rx="2" />
<text x="1753.75" y="511.6" font-size="11.3" fill="#0a0a50" text-anchor="middle" font-weight="normal"  stroke="#0a0a50" stroke-width="0.2">|</text>
<rect x="1763.5" y="497.5" width="19.5" height="19" fill="#eef1f9" stroke="#a8b8f4" stroke-width="1" rx="2" />
<text x="1773.25" y="511.6" font-size="11.3" fill="#0a0a50" text-anchor="middle" font-weight="normal"  stroke="#0a0a50" stroke-width="0.2">°</text>
<rect x="1852.0" y="497.5" width="18.5" height="19" fill="#eef1f9" stroke="#a8b8f4" stroke-width="1" rx="2" />
<text x="1861.25" y="511.6" font-size="11.3" fill="#0a0a50" text-anchor="middle" font-weight="normal"  stroke="#0a0a50" stroke-width="0.2">|</text>
<rect x="1871.0" y="497.5" width="18.5" height="19" fill="#eef1f9" stroke="#a8b8f4" stroke-width="1" rx="2" />
<text x="1880.25" y="511.6" font-size="11.3" fill="#0a0a50" text-anchor="middle" font-weight="normal"  stroke="#0a0a50" stroke-width="0.2">--</text>
<rect x="1890.0" y="497.5" width="19.0" height="19" fill="#eef1f9" stroke="#a8b8f4" stroke-width="1" rx="2" />
<text x="1899.5" y="511.6" font-size="11.3" fill="#0a0a50" text-anchor="middle" font-weight="normal"  stroke="#0a0a50" stroke-width="0.2">°</text>
<line x1="1792.7" y1="507.5" x2="1840.6" y2="507.5" stroke="#000" stroke-width="1" />
<circle cx="1792.7" cy="507.5" r="3.2" fill="#20d020" stroke="#000" stroke-width="0.7"/><circle cx="1817.4" cy="507.5" r="5" fill="#f00" stroke="#000" stroke-width="0.7"/><circle cx="1840.6" cy="507.5" r="3.2" fill="#1030ff" stroke="#000" stroke-width="0.7"/>
<text x="1726" y="537.9" font-size="11.3" fill="#ff2020" text-anchor="start" font-weight="normal"  stroke="#ff2020" stroke-width="0.2">X</text>
<rect x="1741" y="521.3" width="49" height="18.90000000000009" fill="#ffffff" />
<line x1="1741" y1="522.3" x2="1790" y2="522.3" stroke="#6a6a6a" stroke-width="2" />
<line x1="1742" y1="521.3" x2="1742" y2="540.2" stroke="#6a6a6a" stroke-width="2" />
<line x1="1741" y1="539.7" x2="1790" y2="539.7" stroke="#f0f0f0" stroke-width="1" />
<line x1="1789.5" y1="521.3" x2="1789.5" y2="540.2" stroke="#f0f0f0" stroke-width="1" />
<text x="1744" y="535.9" font-size="11.3" fill="#000" text-anchor="start" font-weight="normal"  stroke="#000" stroke-width="0.2">3 37/64"</text>
<rect x="1794" y="521.3" width="49" height="18.90000000000009" fill="#ffffff" />
<line x1="1794" y1="522.3" x2="1843" y2="522.3" stroke="#6a6a6a" stroke-width="2" />
<line x1="1795" y1="521.3" x2="1795" y2="540.2" stroke="#6a6a6a" stroke-width="2" />
<line x1="1794" y1="539.7" x2="1843" y2="539.7" stroke="#f0f0f0" stroke-width="1" />
<line x1="1842.5" y1="521.3" x2="1842.5" y2="540.2" stroke="#f0f0f0" stroke-width="1" />
<text x="1797" y="535.9" font-size="11.3" fill="#000" text-anchor="start" font-weight="normal"  stroke="#000" stroke-width="0.2">32 15/16</text>
<rect x="1846.5" y="521.3" width="48.5" height="18.90000000000009" fill="#ffffff" />
<line x1="1846.5" y1="522.3" x2="1895" y2="522.3" stroke="#6a6a6a" stroke-width="2" />
<line x1="1847.5" y1="521.3" x2="1847.5" y2="540.2" stroke="#6a6a6a" stroke-width="2" />
<line x1="1846.5" y1="539.7" x2="1895" y2="539.7" stroke="#f0f0f0" stroke-width="1" />
<line x1="1894.5" y1="521.3" x2="1894.5" y2="540.2" stroke="#f0f0f0" stroke-width="1" />
<text x="1849.5" y="535.9" font-size="11.3" fill="#000" text-anchor="start" font-weight="normal"  stroke="#000" stroke-width="0.2">45 51/64</text>
<text x="1726" y="559.0" font-size="11.3" fill="#c0e020" text-anchor="start" font-weight="normal"  stroke="#c0e020" stroke-width="0.2">Y</text>
<rect x="1741" y="542.4" width="49" height="18.100000000000023" fill="#f0f0f0" />
<line x1="1741" y1="543.4" x2="1790" y2="543.4" stroke="#6a6a6a" stroke-width="2" />
<line x1="1742" y1="542.4" x2="1742" y2="560.5" stroke="#6a6a6a" stroke-width="2" />
<line x1="1741" y1="560.0" x2="1790" y2="560.0" stroke="#f0f0f0" stroke-width="1" />
<line x1="1789.5" y1="542.4" x2="1789.5" y2="560.5" stroke="#f0f0f0" stroke-width="1" />
<text x="1786" y="557.0" font-size="11.3" fill="#9a9a9a" text-anchor="end" font-weight="normal"  stroke="#9a9a9a" stroke-width="0.2">0"</text>
<rect x="1794" y="542.4" width="49" height="18.100000000000023" fill="#f0f0f0" />
<line x1="1794" y1="543.4" x2="1843" y2="543.4" stroke="#6a6a6a" stroke-width="2" />
<line x1="1795" y1="542.4" x2="1795" y2="560.5" stroke="#6a6a6a" stroke-width="2" />
<line x1="1794" y1="560.0" x2="1843" y2="560.0" stroke="#f0f0f0" stroke-width="1" />
<line x1="1842.5" y1="542.4" x2="1842.5" y2="560.5" stroke="#f0f0f0" stroke-width="1" />
<text x="1839" y="557.0" font-size="11.3" fill="#9a9a9a" text-anchor="end" font-weight="normal"  stroke="#9a9a9a" stroke-width="0.2">0"</text>
<rect x="1846.5" y="542.4" width="48.5" height="18.100000000000023" fill="#f0f0f0" />
<line x1="1846.5" y1="543.4" x2="1895" y2="543.4" stroke="#6a6a6a" stroke-width="2" />
<line x1="1847.5" y1="542.4" x2="1847.5" y2="560.5" stroke="#6a6a6a" stroke-width="2" />
<line x1="1846.5" y1="560.0" x2="1895" y2="560.0" stroke="#f0f0f0" stroke-width="1" />
<line x1="1894.5" y1="542.4" x2="1894.5" y2="560.5" stroke="#f0f0f0" stroke-width="1" />
<text x="1891" y="557.0" font-size="11.3" fill="#9a9a9a" text-anchor="end" font-weight="normal"  stroke="#9a9a9a" stroke-width="0.2">0"</text>
<text x="1726" y="580.0" font-size="11.3" fill="#1010ff" text-anchor="start" font-weight="normal"  stroke="#1010ff" stroke-width="0.2">Z</text>
<rect x="1741" y="563.4" width="49" height="18.100000000000023" fill="#ffffff" />
<line x1="1741" y1="564.4" x2="1790" y2="564.4" stroke="#6a6a6a" stroke-width="2" />
<line x1="1742" y1="563.4" x2="1742" y2="581.5" stroke="#6a6a6a" stroke-width="2" />
<line x1="1741" y1="581.0" x2="1790" y2="581.0" stroke="#f0f0f0" stroke-width="1" />
<line x1="1789.5" y1="563.4" x2="1789.5" y2="581.5" stroke="#f0f0f0" stroke-width="1" />
<text x="1786" y="578.0" font-size="11.3" fill="#000" text-anchor="end" font-weight="normal"  stroke="#000" stroke-width="0.2">2 1/4"</text>
<rect x="1794" y="563.4" width="49" height="18.100000000000023" fill="#ffffff" />
<line x1="1794" y1="564.4" x2="1843" y2="564.4" stroke="#6a6a6a" stroke-width="2" />
<line x1="1795" y1="563.4" x2="1795" y2="581.5" stroke="#6a6a6a" stroke-width="2" />
<line x1="1794" y1="581.0" x2="1843" y2="581.0" stroke="#f0f0f0" stroke-width="1" />
<line x1="1842.5" y1="563.4" x2="1842.5" y2="581.5" stroke="#f0f0f0" stroke-width="1" />
<text x="1839" y="578.0" font-size="11.3" fill="#000" text-anchor="end" font-weight="normal"  stroke="#000" stroke-width="0.2">2 1/4"</text>
<rect x="1846.5" y="563.4" width="48.5" height="18.100000000000023" fill="#ffffff" />
<line x1="1846.5" y1="564.4" x2="1895" y2="564.4" stroke="#6a6a6a" stroke-width="2" />
<line x1="1847.5" y1="563.4" x2="1847.5" y2="581.5" stroke="#6a6a6a" stroke-width="2" />
<line x1="1846.5" y1="581.0" x2="1895" y2="581.0" stroke="#f0f0f0" stroke-width="1" />
<line x1="1894.5" y1="563.4" x2="1894.5" y2="581.5" stroke="#f0f0f0" stroke-width="1" />
<text x="1891" y="578.0" font-size="11.3" fill="#000" text-anchor="end" font-weight="normal"  stroke="#000" stroke-width="0.2">2 1/4"</text>
<path d="M1725.7,592.5 L1720.5,592.5 L1720.5,636.0 L1912.0,636.0 L1912.0,592.5 L1796.4,592.5" fill="none" stroke="#a8a8a8" stroke-width="1"/>
<text x="1728.7" y="597.1" font-size="11.3" fill="#0a0a50" text-anchor="start" font-weight="normal"  stroke="#0a0a50" stroke-width="0.2" textLength="64.7" lengthAdjust="spacingAndGlyphs">Tangent type</text>
<rect x="1864" y="586" width="36" height="12" fill="#f3f6fa" />
<rect x="1866.5" y="586.5" width="11" height="11" fill="#fbfbfb" />
<line x1="1866.5" y1="587" x2="1877.5" y2="587" stroke="#7a7a7a" stroke-width="1.2" />
<line x1="1867" y1="586.5" x2="1867" y2="597.5" stroke="#7a7a7a" stroke-width="1.2" />
<line x1="1866.5" y1="597" x2="1877.5" y2="597" stroke="#e0e0e0" stroke-width="1" />
<line x1="1877" y1="586.5" x2="1877" y2="597.5" stroke="#e0e0e0" stroke-width="1" />
<text x="1883" y="597.6" font-size="11.3" fill="#0a0a50" text-anchor="start" font-weight="normal"  stroke="#0a0a50" stroke-width="0.2">C2</text>
<rect x="1724.0" y="601.5" width="29.0" height="30" fill="#ffffff" stroke="#2a4ae8" stroke-width="1.4" rx="2" />
<rect x="1754.0" y="601.5" width="30.0" height="30" fill="#eef1f9" stroke="#a8b8f4" stroke-width="1" rx="2" />
<rect x="1785.0" y="601.5" width="30.0" height="30" fill="#eef1f9" stroke="#a8b8f4" stroke-width="1" rx="2" />
<rect x="1816.0" y="601.5" width="30.0" height="30" fill="#eef1f9" stroke="#a8b8f4" stroke-width="1" rx="2" />
<rect x="1847.0" y="601.5" width="30.0" height="30" fill="#eef1f9" stroke="#a8b8f4" stroke-width="1" rx="2" />
<rect x="1878.0" y="601.5" width="30.0" height="30" fill="#eef1f9" stroke="#a8b8f4" stroke-width="1" rx="2" />
<line x1="1730.5" y1="608.5" x2="1746.5" y2="624.5" stroke="#000" stroke-width="1" />
<circle cx="1730.5" cy="608.5" r="2" fill="#20d020" stroke="#000" stroke-width="0.6"/>
<circle cx="1737.5" cy="615.5" r="3.3" fill="#f00" stroke="#000" stroke-width="0.6"/>
<circle cx="1746.5" cy="624.5" r="2" fill="#1030ff" stroke="#000" stroke-width="0.6"/>
<path d="M1765.5,609 L1765.5,617 L1777.5,622.5" fill="none" stroke="#000" stroke-width="1"/>
<circle cx="1765.5" cy="609" r="2" fill="#20d020" stroke="#000" stroke-width="0.6"/>
<circle cx="1765.5" cy="617" r="3.3" fill="#f00" stroke="#000" stroke-width="0.6"/>
<circle cx="1777.5" cy="622.5" r="2" fill="#1030ff" stroke="#000" stroke-width="0.6"/>
<line x1="1800.5" y1="606" x2="1800.5" y2="625.5" stroke="#000" stroke-width="1" />
<circle cx="1800.5" cy="606" r="2" fill="#1030ff" stroke="#000" stroke-width="0.6"/>
<circle cx="1800.5" cy="615.5" r="3.3" fill="#f00" stroke="#000" stroke-width="0.6"/>
<circle cx="1800.5" cy="625.5" r="2" fill="#20d020" stroke="#000" stroke-width="0.6"/>
<line x1="1821.5" y1="615.5" x2="1840.5" y2="615.5" stroke="#000" stroke-width="1" />
<circle cx="1821.5" cy="615.5" r="2" fill="#20d020" stroke="#000" stroke-width="0.6"/>
<circle cx="1831" cy="615.5" r="3.3" fill="#f00" stroke="#000" stroke-width="0.6"/>
<circle cx="1840.5" cy="615.5" r="2" fill="#1030ff" stroke="#000" stroke-width="0.6"/>
<path d="M1855,613 A7,7 0 1 0 1866,619" fill="none" stroke="#ff1010" stroke-width="1.6"/>
<line x1="1854.5" y1="608.5" x2="1870.5" y2="624.5" stroke="#000" stroke-width="1" />
<circle cx="1854.5" cy="608.5" r="2" fill="#20d020" stroke="#000" stroke-width="0.6"/>
<circle cx="1861.5" cy="615.5" r="3.3" fill="#f00" stroke="#000" stroke-width="0.6"/>
<circle cx="1870.5" cy="624.5" r="2" fill="#1030ff" stroke="#000" stroke-width="0.6"/>
<circle cx="1893" cy="616.5" r="3.2" fill="#ffd000" stroke="#000" stroke-width="0.6"/>
<rect x="1718.5" y="673.5" width="193.5" height="198" fill="#ffffff" />
<line x1="1718" y1="673.8" x2="1912" y2="673.8" stroke="#6a6a6a" stroke-width="1.5" />
<line x1="1718.5" y1="673" x2="1718.5" y2="889" stroke="#6a6a6a" stroke-width="1.2" />
<rect x="1719" y="674.5" width="192.5" height="16" fill="#f0f0f0" />
<line x1="1719.5" y1="676" x2="1719.5" y2="690" stroke="#ffffff" stroke-width="1" />
<line x1="1757.0" y1="676" x2="1757.0" y2="690" stroke="#b0b0b0" stroke-width="1" />
<line x1="1719" y1="690" x2="1757.5" y2="690" stroke="#b0b0b0" stroke-width="1" />
<text x="1724.3" y="688.1" font-size="11.3" fill="#000" text-anchor="start" font-weight="normal"  stroke="#000" stroke-width="0.2" textLength="26.7" lengthAdjust="spacingAndGlyphs">Guide</text>
<line x1="1759.3" y1="676" x2="1759.3" y2="690" stroke="#ffffff" stroke-width="1" />
<line x1="1810.3" y1="676" x2="1810.3" y2="690" stroke="#b0b0b0" stroke-width="1" />
<line x1="1758.8" y1="690" x2="1810.8" y2="690" stroke="#b0b0b0" stroke-width="1" />
<text x="1805" y="688.1" font-size="11.3" fill="#000" text-anchor="end" font-weight="normal"  stroke="#000" stroke-width="0.2">X</text>
<line x1="1812.5" y1="676" x2="1812.5" y2="690" stroke="#ffffff" stroke-width="1" />
<line x1="1860.3" y1="676" x2="1860.3" y2="690" stroke="#b0b0b0" stroke-width="1" />
<line x1="1812" y1="690" x2="1860.8" y2="690" stroke="#b0b0b0" stroke-width="1" />
<text x="1855" y="688.1" font-size="11.3" fill="#000" text-anchor="end" font-weight="normal"  stroke="#000" stroke-width="0.2">Y</text>
<line x1="1862.5" y1="676" x2="1862.5" y2="690" stroke="#ffffff" stroke-width="1" />
<line x1="1910.3" y1="676" x2="1910.3" y2="690" stroke="#b0b0b0" stroke-width="1" />
<line x1="1862" y1="690" x2="1910.8" y2="690" stroke="#b0b0b0" stroke-width="1" />
<text x="1905.5" y="688.1" font-size="11.3" fill="#000" text-anchor="end" font-weight="normal"  stroke="#000" stroke-width="0.2">Z</text>
<rect x="1719" y="871.6" width="192.5" height="17.2" fill="#f0f0f0" />
<line x1="1736" y1="880" x2="1893" y2="880" stroke="#7a7a7a" stroke-width="2" />
<rect x="0" y="1010.5" width="1921" height="22.5" fill="#f0f0f0" />
<line x1="0" y1="1011" x2="1921" y2="1011" stroke="#ffffff" stroke-width="1" />
<line x1="0" y1="1032.5" x2="1921" y2="1032.5" stroke="#7a7a68" stroke-width="1" />
<text x="2" y="1027.6" font-size="12.3" fill="#000" text-anchor="start" font-weight="normal"  textLength="557" lengthAdjust="spacingAndGlyphs">Use the arrow keys with Ctrl to move the point, Tab to go to the next point, shift Tab to the previous point.</text>
<line x1="1512" y1="1015" x2="1537" y2="1015" stroke="#a0a0a0" stroke-width="1" />
<line x1="1512.5" y1="1015" x2="1512.5" y2="1031" stroke="#a0a0a0" stroke-width="1" />
<line x1="1512" y1="1030.5" x2="1537" y2="1030.5" stroke="#ffffff" stroke-width="1" />
<line x1="1536.5" y1="1015" x2="1536.5" y2="1031" stroke="#ffffff" stroke-width="1" />
<text x="1514.5" y="1027.7" font-size="12.3" fill="#000" text-anchor="start" font-weight="normal"  textLength="4" lengthAdjust="spacingAndGlyphs">"</text>
<line x1="1540" y1="1015" x2="1609" y2="1015" stroke="#a0a0a0" stroke-width="1" />
<line x1="1540.5" y1="1015" x2="1540.5" y2="1031" stroke="#a0a0a0" stroke-width="1" />
<line x1="1540" y1="1030.5" x2="1609" y2="1030.5" stroke="#ffffff" stroke-width="1" />
<line x1="1608.5" y1="1015" x2="1608.5" y2="1031" stroke="#ffffff" stroke-width="1" />
<text x="1542.5" y="1027.7" font-size="12.3" fill="#000" text-anchor="start" font-weight="normal"  textLength="54" lengthAdjust="spacingAndGlyphs">X: 43 7/64"</text>
<line x1="1613" y1="1015" x2="1683" y2="1015" stroke="#a0a0a0" stroke-width="1" />
<line x1="1613.5" y1="1015" x2="1613.5" y2="1031" stroke="#a0a0a0" stroke-width="1" />
<line x1="1613" y1="1030.5" x2="1683" y2="1030.5" stroke="#ffffff" stroke-width="1" />
<line x1="1682.5" y1="1015" x2="1682.5" y2="1031" stroke="#ffffff" stroke-width="1" />
<text x="1615.5" y="1027.7" font-size="12.3" fill="#000" text-anchor="start" font-weight="normal"  textLength="43.7" lengthAdjust="spacingAndGlyphs">Y: 0.000"</text>
<line x1="1686" y1="1015" x2="1756" y2="1015" stroke="#a0a0a0" stroke-width="1" />
<line x1="1686.5" y1="1015" x2="1686.5" y2="1031" stroke="#a0a0a0" stroke-width="1" />
<line x1="1686" y1="1030.5" x2="1756" y2="1030.5" stroke="#ffffff" stroke-width="1" />
<line x1="1755.5" y1="1015" x2="1755.5" y2="1031" stroke="#ffffff" stroke-width="1" />
<text x="1688.5" y="1027.7" font-size="12.3" fill="#000" text-anchor="start" font-weight="normal"  textLength="55.4" lengthAdjust="spacingAndGlyphs">Z: 3 27/32"</text>
<line x1="1759.5" y1="1015" x2="1814" y2="1015" stroke="#a0a0a0" stroke-width="1" />
<line x1="1760.0" y1="1015" x2="1760.0" y2="1031" stroke="#a0a0a0" stroke-width="1" />
<line x1="1759.5" y1="1030.5" x2="1814" y2="1030.5" stroke="#ffffff" stroke-width="1" />
<line x1="1813.5" y1="1015" x2="1813.5" y2="1031" stroke="#ffffff" stroke-width="1" />
<line x1="1817" y1="1015" x2="1872" y2="1015" stroke="#a0a0a0" stroke-width="1" />
<line x1="1817.5" y1="1015" x2="1817.5" y2="1031" stroke="#a0a0a0" stroke-width="1" />
<line x1="1817" y1="1030.5" x2="1872" y2="1030.5" stroke="#ffffff" stroke-width="1" />
<line x1="1871.5" y1="1015" x2="1871.5" y2="1031" stroke="#ffffff" stroke-width="1" />
<line x1="1875.5" y1="1015" x2="1900" y2="1015" stroke="#a0a0a0" stroke-width="1" />
<line x1="1876.0" y1="1015" x2="1876.0" y2="1031" stroke="#a0a0a0" stroke-width="1" />
<line x1="1875.5" y1="1030.5" x2="1900" y2="1030.5" stroke="#ffffff" stroke-width="1" />
<line x1="1899.5" y1="1015" x2="1899.5" y2="1031" stroke="#ffffff" stroke-width="1" />
<g stroke="#a0a0a0" stroke-width="1"><line x1="1905" y1="1031" x2="1919" y2="1017"/><line x1="1909" y1="1031" x2="1919" y2="1021"/><line x1="1913" y1="1031" x2="1919" y2="1025"/></g>
</g></svg></body></html>
